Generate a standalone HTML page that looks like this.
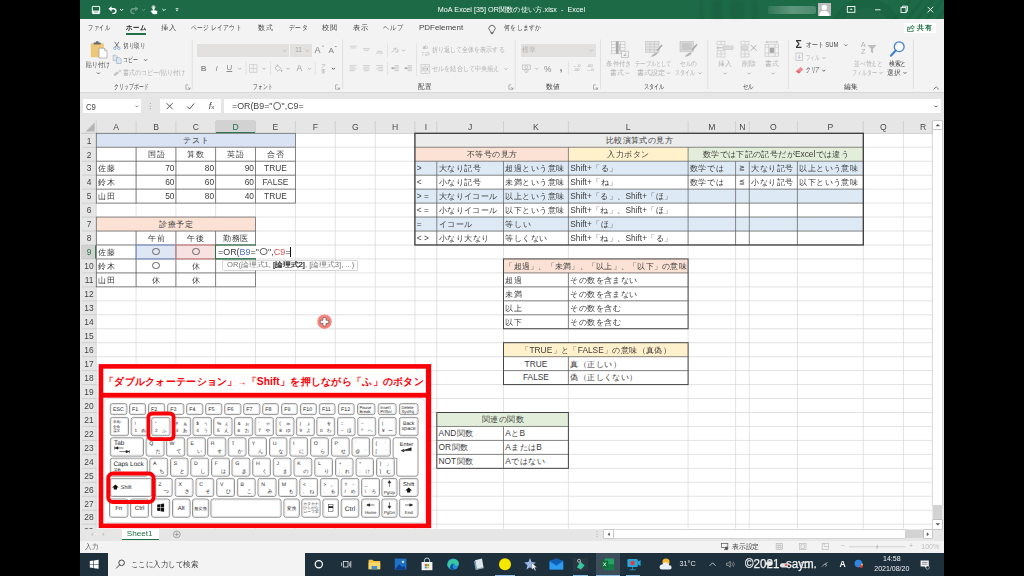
<!DOCTYPE html>
<html><head><meta charset="utf-8"><title>Excel</title>
<style>
html,body{margin:0;padding:0;background:#000;}
body{width:1024px;height:576px;overflow:hidden;position:relative;font-family:"Liberation Sans", sans-serif;}
#bg div,#fl div{position:absolute;}
.t{position:absolute;white-space:nowrap;}
.j{text-align:justify;text-align-last:justify;text-justify:inter-character;}
svg{position:absolute;left:0;top:0;}
#app{position:absolute;left:0;top:0;width:1024px;height:576px;filter:blur(.35px);}
</style></head><body>
<div id="app">
<div id="bg">
<div style="left:80.00px;top:0.00px;width:864.00px;height:576.00px;background:#fff;"></div>
<div style="left:80.00px;top:0.00px;width:864.00px;height:19.30px;background:#1d6a47;"></div>
<div style="left:80.00px;top:19.30px;width:864.00px;height:72.80px;background:#f3f3f3;"></div>
<div style="left:80.00px;top:92.10px;width:864.00px;height:28.00px;background:#e6e6e6;"></div>
<div style="left:80.00px;top:92.10px;width:864.00px;height:1.00px;background:#d8d8d8;"></div>
<div style="left:82.80px;top:98.90px;width:58.70px;height:14.60px;background:#fff;"></div>
<div style="left:159.70px;top:98.90px;width:61.50px;height:14.60px;background:#fff;"></div>
<div style="left:224.00px;top:98.90px;width:717.00px;height:14.60px;background:#fff;"></div>
<div style="left:80.00px;top:120.00px;width:864.00px;height:13.50px;background:#e6e6e6;"></div>
<div style="left:80.00px;top:133.30px;width:16.30px;height:395.30px;background:#e6e6e6;"></div>
<div style="left:215.60px;top:120.00px;width:39.90px;height:13.50px;background:#d2d2d2;"></div>
<div style="left:215.60px;top:132.40px;width:39.90px;height:1.20px;background:#217346;"></div>
<div style="left:81.00px;top:244.98px;width:15.30px;height:13.96px;background:#d2d2d2;"></div>
<div style="left:95.30px;top:244.98px;width:1.20px;height:13.96px;background:#217346;"></div>
<div style="left:80.00px;top:528.60px;width:864.00px;height:12.00px;background:#e6e6e6;"></div>
<div style="left:80.00px;top:540.50px;width:864.00px;height:12.30px;background:#f3f3f3;"></div>
<div style="left:80.00px;top:552.80px;width:864.00px;height:23.20px;background:#1e303c;"></div>
<div style="left:107.80px;top:552.80px;width:197.40px;height:23.20px;background:#f3f3f3;"></div>
<div style="left:121.60px;top:528.60px;width:37.50px;height:10.80px;background:#fff;"></div>
<div style="left:121.60px;top:539.00px;width:37.50px;height:1.20px;background:#217346;"></div>
<div style="left:932.60px;top:120.00px;width:11.40px;height:408.60px;background:#e6e6e6;"></div>
<div style="left:933.30px;top:120.80px;width:9.00px;height:8.60px;background:#fff;box-shadow:0 0 0 .5px #ababab;"></div>
<div style="left:933.30px;top:130.00px;width:9.00px;height:375.00px;background:#fff;box-shadow:0 0 0 .5px #c4c4c4;"></div>
<div style="left:933.30px;top:505.40px;width:9.00px;height:14.40px;background:#d3d3d3;"></div>
<div style="left:933.30px;top:520.00px;width:9.00px;height:8.60px;background:#fff;box-shadow:0 0 0 .5px #ababab;"></div>
<div style="left:603.80px;top:529.90px;width:9.50px;height:8.60px;background:#fff;box-shadow:0 0 0 .5px #ababab;"></div>
<div style="left:613.80px;top:529.90px;width:290.80px;height:8.60px;background:#fff;box-shadow:0 0 0 .5px #c4c4c4;"></div>
<div style="left:905.00px;top:529.90px;width:18.50px;height:8.60px;background:#d3d3d3;"></div>
<div style="left:923.80px;top:529.90px;width:8.60px;height:8.60px;background:#fff;box-shadow:0 0 0 .5px #ababab;"></div>
<div style="left:81.00px;top:524.18px;width:15.30px;height:4.42px;background:#e6e6e6;overflow:hidden;"><span style="position:absolute;left:0;width:15.300px;text-align:center;top:1.600px;font-size:8.400px;line-height:10px;color:#444">29</span></div>
<div style="left:767.50px;top:6.00px;width:48.00px;height:8.00px;background:linear-gradient(90deg,rgba(255,255,255,.10),rgba(255,255,255,.30) 50%,rgba(255,255,255,.22));border-radius:2px;filter:blur(.6px);"></div>
<div style="left:817.50px;top:2.80px;width:13.50px;height:13.20px;background:#bcbfbd;"></div>
<div style="left:700.00px;top:0.00px;width:3.00px;height:19.30px;background:rgba(0,0,0,.06);filter:blur(1px);"></div>
<div style="left:712.00px;top:0.00px;width:10.00px;height:19.30px;background:rgba(0,0,0,.07);filter:blur(1.5px);"></div>
<div style="left:730.00px;top:0.00px;width:14.00px;height:19.30px;background:rgba(0,0,0,.06);filter:blur(1.5px);"></div>
<div style="left:752.00px;top:0.00px;width:6.00px;height:19.30px;background:rgba(0,0,0,.05);filter:blur(1.5px);"></div>
<div style="left:125.50px;top:33.40px;width:20.00px;height:1.60px;background:#217346;"></div>
<div style="left:903.50px;top:22.50px;width:32.50px;height:10.80px;background:#fff;"></div>
<div style="left:197.20px;top:43.80px;width:91.50px;height:13.00px;background:#e3e1df;"></div>
<div style="left:290.00px;top:43.80px;width:22.00px;height:13.00px;background:#e3e1df;"></div>
<div style="left:520.50px;top:43.80px;width:75.30px;height:13.00px;background:#e3e1df;"></div>
<div style="left:494.60px;top:574.60px;width:20.80px;height:1.40px;background:#8cc0e8;"></div>
<div style="left:572.60px;top:557.60px;width:15.60px;height:13.60px;background:#2a3740;"></div>
<div style="left:573.00px;top:574.60px;width:15.00px;height:1.40px;background:#8cc0e8;"></div>
<div style="left:595.60px;top:552.80px;width:24.00px;height:23.20px;background:#3c4e59;"></div>
<div style="left:595.60px;top:574.60px;width:24.00px;height:1.40px;background:#8cc0e8;"></div>
<div style="left:626.40px;top:574.60px;width:14.00px;height:1.40px;background:#8cc0e8;"></div>
</div>
<svg width="1024" height="576" viewBox="0 0 1024 576">
<path d="M96.3 147.26H932.3 M96.3 161.22H932.3 M96.3 175.18H932.3 M96.3 189.14H932.3 M96.3 203.10H932.3 M96.3 217.06H932.3 M96.3 231.02H932.3 M96.3 244.98H932.3 M96.3 258.94H932.3 M96.3 272.90H932.3 M96.3 286.86H932.3 M96.3 300.82H932.3 M96.3 314.78H932.3 M96.3 328.74H932.3 M96.3 342.70H932.3 M96.3 356.66H932.3 M96.3 370.62H932.3 M96.3 384.58H932.3 M96.3 398.54H932.3 M96.3 412.50H932.3 M96.3 426.46H932.3 M96.3 440.42H932.3 M96.3 454.38H932.3 M96.3 468.34H932.3 M96.3 482.30H932.3 M96.3 496.26H932.3 M96.3 510.22H932.3 M96.3 524.18H932.3 M136.10 133.3V528.6 M175.90 133.3V528.6 M215.60 133.3V528.6 M255.50 133.3V528.6 M295.40 133.3V528.6 M335.30 133.3V528.6 M375.30 133.3V528.6 M414.90 133.3V528.6 M436.80 133.3V528.6 M503.50 133.3V528.6 M568.40 133.3V528.6 M688.10 133.3V528.6 M735.60 133.3V528.6 M749.30 133.3V528.6 M797.40 133.3V528.6 M863.30 133.3V528.6 M903.40 133.3V528.6 M932.30 133.3V528.6" stroke="#d2d2d2" stroke-width="0.62" fill="none"/>
<path d="M96.3 120.500V528.600M81 133.400H932.400" stroke="#c9c9c9" stroke-width=".7" fill="none"/>
</svg>
<div id="fl">
<div style="left:96.30px;top:133.30px;width:199.10px;height:13.96px;background:#dae3f3;"></div>
<div style="left:96.30px;top:217.06px;width:159.20px;height:13.96px;background:#fbe2d5;"></div>
<div style="left:136.10px;top:244.98px;width:39.80px;height:13.96px;background:#dfe7f5;"></div>
<div style="left:175.90px;top:244.98px;width:39.70px;height:13.96px;background:#f7e1e1;"></div>
<div style="left:414.90px;top:133.30px;width:448.40px;height:13.96px;background:#ececec;"></div>
<div style="left:414.90px;top:147.26px;width:153.50px;height:13.96px;background:#fbe2d5;"></div>
<div style="left:568.40px;top:147.26px;width:119.70px;height:13.96px;background:#fff1cc;"></div>
<div style="left:688.10px;top:147.26px;width:175.20px;height:13.96px;background:#e2eed9;"></div>
<div style="left:414.90px;top:161.22px;width:448.40px;height:13.96px;background:#ddeaf6;"></div>
<div style="left:414.90px;top:189.14px;width:448.40px;height:13.96px;background:#ddeaf6;"></div>
<div style="left:414.90px;top:217.06px;width:448.40px;height:13.96px;background:#ddeaf6;"></div>
<div style="left:503.50px;top:258.94px;width:184.60px;height:13.96px;background:#fbe2d5;"></div>
<div style="left:503.50px;top:342.70px;width:184.60px;height:13.96px;background:#fff1cc;"></div>
<div style="left:436.80px;top:412.50px;width:131.60px;height:13.96px;background:#e2eed9;"></div>
</div>
<svg width="1024" height="576" viewBox="0 0 1024 576">
<path d="M136.10 121V133 M175.90 121V133 M215.60 121V133 M255.50 121V133 M295.40 121V133 M335.30 121V133 M375.30 121V133 M414.90 121V133 M436.80 121V133 M503.50 121V133 M568.40 121V133 M688.10 121V133 M735.60 121V133 M749.30 121V133 M797.40 121V133 M863.30 121V133 M903.40 121V133 M932.30 121V133 M82 133.30H96 M82 147.26H96 M82 161.22H96 M82 175.18H96 M82 189.14H96 M82 203.10H96 M82 217.06H96 M82 231.02H96 M82 244.98H96 M82 258.94H96 M82 272.90H96 M82 286.86H96 M82 300.82H96 M82 314.78H96 M82 328.74H96 M82 342.70H96 M82 356.66H96 M82 370.62H96 M82 384.58H96 M82 398.54H96 M82 412.50H96 M82 426.46H96 M82 440.42H96 M82 454.38H96 M82 468.34H96 M82 482.30H96 M82 496.26H96 M82 510.22H96 M82 524.18H96" stroke="#c6c6c6" stroke-width="0.7" fill="none"/>
<path d="M94.6 122.6V131.6H85.6Z" fill="#b4b4b4"/>
<rect x="96.30" y="133.30" width="199.10" height="69.80" stroke="#646464" stroke-width="0.75" fill="none"/>
<path d="M96.30 147.26H295.40" stroke="#646464" stroke-width="0.75" fill="none"/>
<path d="M96.30 161.22H295.40" stroke="#646464" stroke-width="0.75" fill="none"/>
<path d="M96.30 175.18H295.40" stroke="#646464" stroke-width="0.75" fill="none"/>
<path d="M96.30 189.14H295.40" stroke="#646464" stroke-width="0.75" fill="none"/>
<path d="M136.10 147.26V203.10" stroke="#646464" stroke-width="0.75" fill="none"/>
<path d="M175.90 147.26V203.10" stroke="#646464" stroke-width="0.75" fill="none"/>
<path d="M215.60 147.26V203.10" stroke="#646464" stroke-width="0.75" fill="none"/>
<path d="M255.50 147.26V203.10" stroke="#646464" stroke-width="0.75" fill="none"/>
<rect x="96.30" y="217.06" width="159.20" height="69.80" stroke="#646464" stroke-width="0.75" fill="none"/>
<path d="M96.30 231.02H255.50" stroke="#646464" stroke-width="0.75" fill="none"/>
<path d="M96.30 244.98H255.50" stroke="#646464" stroke-width="0.75" fill="none"/>
<path d="M96.30 258.94H255.50" stroke="#646464" stroke-width="0.75" fill="none"/>
<path d="M96.30 272.90H255.50" stroke="#646464" stroke-width="0.75" fill="none"/>
<path d="M136.10 231.02V286.86" stroke="#646464" stroke-width="0.75" fill="none"/>
<path d="M175.90 231.02V286.86" stroke="#646464" stroke-width="0.75" fill="none"/>
<path d="M215.60 231.02V286.86" stroke="#646464" stroke-width="0.75" fill="none"/>
<path d="M414.90 147.26H863.30" stroke="#646464" stroke-width="0.75" fill="none"/>
<path d="M414.90 161.22H863.30" stroke="#646464" stroke-width="0.75" fill="none"/>
<path d="M414.90 175.18H863.30" stroke="#646464" stroke-width="0.75" fill="none"/>
<path d="M414.90 189.14H863.30" stroke="#646464" stroke-width="0.75" fill="none"/>
<path d="M414.90 203.10H863.30" stroke="#646464" stroke-width="0.75" fill="none"/>
<path d="M414.90 217.06H863.30" stroke="#646464" stroke-width="0.75" fill="none"/>
<path d="M414.90 231.02H863.30" stroke="#646464" stroke-width="0.75" fill="none"/>
<path d="M436.80 161.22V244.98" stroke="#646464" stroke-width="0.75" fill="none"/>
<path d="M503.50 161.22V244.98" stroke="#646464" stroke-width="0.75" fill="none"/>
<path d="M568.40 147.26V244.98" stroke="#646464" stroke-width="0.75" fill="none"/>
<path d="M688.10 147.26V244.98" stroke="#646464" stroke-width="0.75" fill="none"/>
<path d="M735.60 161.22V244.98" stroke="#646464" stroke-width="0.75" fill="none"/>
<path d="M749.30 161.22V244.98" stroke="#646464" stroke-width="0.75" fill="none"/>
<path d="M797.40 161.22V244.98" stroke="#646464" stroke-width="0.75" fill="none"/>
<rect x="414.90" y="133.30" width="448.40" height="111.68" stroke="#3a3a3a" stroke-width="1.3" fill="none"/>
<rect x="503.50" y="258.94" width="184.60" height="69.80" stroke="#444" stroke-width="1.0" fill="none"/>
<path d="M503.50 272.90H688.10" stroke="#646464" stroke-width="0.75" fill="none"/>
<path d="M503.50 286.86H688.10" stroke="#646464" stroke-width="0.75" fill="none"/>
<path d="M503.50 300.82H688.10" stroke="#646464" stroke-width="0.75" fill="none"/>
<path d="M503.50 314.78H688.10" stroke="#646464" stroke-width="0.75" fill="none"/>
<path d="M568.40 272.90V328.74" stroke="#646464" stroke-width="0.75" fill="none"/>
<rect x="503.50" y="342.70" width="184.60" height="41.88" stroke="#444" stroke-width="1.0" fill="none"/>
<path d="M503.50 356.66H688.10" stroke="#646464" stroke-width="0.75" fill="none"/>
<path d="M503.50 370.62H688.10" stroke="#646464" stroke-width="0.75" fill="none"/>
<path d="M568.40 356.66V384.58" stroke="#646464" stroke-width="0.75" fill="none"/>
<rect x="436.80" y="412.50" width="131.60" height="55.84" stroke="#444" stroke-width="1.0" fill="none"/>
<path d="M436.80 426.46H568.40" stroke="#646464" stroke-width="0.75" fill="none"/>
<path d="M436.80 440.42H568.40" stroke="#646464" stroke-width="0.75" fill="none"/>
<path d="M436.80 454.38H568.40" stroke="#646464" stroke-width="0.75" fill="none"/>
<path d="M503.50 426.46V468.34" stroke="#646464" stroke-width="0.75" fill="none"/>
<rect x="136.10" y="244.98" width="39.80" height="13.96" stroke="#7296d8" stroke-width="0.8" fill="none"/>
<rect x="135.30" y="244.18" width="1.600" height="1.600" fill="#7296d8"/>
<rect x="175.10" y="244.18" width="1.600" height="1.600" fill="#7296d8"/>
<rect x="135.30" y="258.14" width="1.600" height="1.600" fill="#7296d8"/>
<rect x="175.10" y="258.14" width="1.600" height="1.600" fill="#7296d8"/>
<rect x="175.90" y="244.98" width="39.70" height="13.96" stroke="#e27f7c" stroke-width="0.8" fill="none"/>
<rect x="175.10" y="244.18" width="1.600" height="1.600" fill="#e27f7c"/>
<rect x="214.80" y="244.18" width="1.600" height="1.600" fill="#e27f7c"/>
<rect x="175.10" y="258.14" width="1.600" height="1.600" fill="#e27f7c"/>
<rect x="214.80" y="258.14" width="1.600" height="1.600" fill="#e27f7c"/>
<path d="M255.50 244.98H215.60V258.94H255.50" stroke="#217346" stroke-width="1.2" fill="none"/>
<circle cx="824.3" cy="7.4" r="2.7" fill="#fff"/><path d="M819.3 16v-1.2c0-2.6 2.2-4 5-4s5 1.4 5 4V16z" fill="#fff"/>
<clipPath id="tbc"><rect x="80" y="0" width="864" height="19.3"/></clipPath><g clip-path="url(#tbc)" stroke="rgba(0,0,0,.06)" stroke-width="3.5" fill="none"><path d="M905 22L925 -3"/><path d="M915 22L935 -3"/><path d="M925 22L945 -3"/><path d="M935 22L955 -3"/><path d="M893 22L913 -3"/><circle cx="866" cy="34" r="36" fill="rgba(0,0,0,.05)" stroke="none"/><circle cx="866" cy="34" r="26" fill="rgba(255,255,255,.025)" stroke="none"/></g>
<g fill="none" stroke="#fff" stroke-width="1">
<rect x="92.300" y="6.400" width="7.400" height="7.200" rx=".7"/><rect x="92.600" y="10.600" width="6.800" height="2.800" fill="#fff" stroke="none"/><rect x="94.400" y="11.500" width="1.100" height="1" fill="#1d6a47" stroke="none"/><rect x="96.500" y="11.500" width="1.100" height="1" fill="#1d6a47" stroke="none"/>
<path d="M110.200 8.800h3.400a2.300 2.300 0 0 1 0 4.600h-1.200" stroke-width="1.400"/><path d="M111.600 6.200L108.400 8.800l3.200 2.600z" fill="#fff" stroke="none"/>
<path d="M120 9l1.600 1.600 1.600-1.600" stroke-width="1"/>
<g opacity=".35"><path d="M136.600 8.800h-3.400a2.300 2.300 0 0 0 0 4.600h1.200" stroke-width="1.400"/><path d="M135.200 6.200l3.200 2.600-3.200 2.600z" fill="#fff" stroke="none"/><path d="M142 9l1.600 1.600 1.600-1.600" stroke-width="1"/></g>
<circle cx="153.500" cy="7.200" r="1.500" stroke-width=".8"/><path d="M152.900 7.200v3.800l-1.300-.4-.5.800 2 2.600h3.600l.5-2.800-3.100-1V7.200a.6.600 0 0 0-1.200 0z" fill="#fff" stroke-width=".4"/>
<path d="M162.400 9l1.600 1.600 1.600-1.600" stroke-width="1"/>
<path d="M175.600 8.600h2.800" stroke-width=".8"/><path d="M175.600 9.800l1.400 1.400 1.400-1.400z" fill="#fff" stroke="none"/>
<rect x="847.300" y="6.500" width="7.600" height="5.800" stroke-width=".9"/><path d="M849.600 9.800l1.500-1.600 1.500 1.600z" fill="#fff" stroke="none"/>
<path d="M875 9.800h5.600" stroke-width=".9"/>
<rect x="901" y="7.600" width="5" height="5" stroke-width=".9"/><path d="M902.400 7.600V6.200h5v5H906" stroke-width=".9"/>
<path d="M927.600 6.800l5.600 5.600M933.200 6.800l-5.600 5.600" stroke-width=".9"/>
</g>
<g fill="none" stroke="#444" stroke-width=".8"><path d="M489.8 30.6a3.1 3.1 0 1 1 4.4 0c-.6.6-.8 1-.8 1.8h-2.8c0-.8-.2-1.200-.8-1.800z"/><path d="M490.800 33.600h2.400"/></g>
<g fill="none" stroke="#217346" stroke-width=".8"><path d="M909.600 27.200h-2v4.200h5.600v-1.600"/><path d="M909 29.600c.2-2 1.400-3 3.200-3.100v-1.300l2.200 2-2.200 2v-1.300c-1.400 0-2.400.5-3.200 1.700z"/></g>
<path d="M192.2 39.5V89 M342.6 39.5V89 M515.3 39.5V89 M600.5 39.5V89 M707.8 39.5V89 M788.3 39.5V89 M913.4 39.5V89" stroke="#dadada" stroke-width=".8" fill="none"/>
<path d="M246 61.5V75M270.5 61.5V75M315.3 61.5V75M387.5 43.5V57M387.5 61.5V75M416.5 43V76M568.5 61.5V75" stroke="#dedede" stroke-width=".8" fill="none"/>
<g fill="none" stroke="#8a8a8a" stroke-width=".6"><path d="M186 85h-.1v4.2h4.2"/><path d="M186 84.8h2.2"/><path d="M188.2 87.2l1.8 1.8m0-1.4v1.4h-1.400"/></g>
<g fill="none" stroke="#8a8a8a" stroke-width=".6"><path d="M335.6 85h-.1v4.2h4.2"/><path d="M335.6 84.8h2.2"/><path d="M337.8 87.2l1.8 1.8m0-1.4v1.4h-1.400"/></g>
<g fill="none" stroke="#8a8a8a" stroke-width=".6"><path d="M509 85h-.1v4.2h4.2"/><path d="M509 84.8h2.2"/><path d="M511.2 87.2l1.8 1.8m0-1.4v1.4h-1.400"/></g>
<g fill="none" stroke="#8a8a8a" stroke-width=".6"><path d="M593.6 85h-.1v4.2h4.2"/><path d="M593.6 84.8h2.2"/><path d="M595.8000000000001 87.2l1.8 1.8m0-1.4v1.4h-1.400"/></g>
<path d="M96.9 72.45l1.5 1.5 1.5 -1.5" stroke="#444" stroke-width="0.8" fill="none"/>
<path d="M144.1 59.25l1.5 1.5 1.5 -1.5" stroke="#444" stroke-width="0.8" fill="none"/>
<path d="M283.0 49.75l1.5 1.5 1.5 -1.5" stroke="#b5b5b5" stroke-width="0.8" fill="none"/>
<path d="M306.0 49.75l1.5 1.5 1.5 -1.5" stroke="#b5b5b5" stroke-width="0.8" fill="none"/>
<path d="M238.2 67.85l1.5 1.5 1.5 -1.5" stroke="#aaa" stroke-width="0.8" fill="none"/>
<path d="M262.5 67.85l1.5 1.5 1.5 -1.5" stroke="#aaa" stroke-width="0.8" fill="none"/>
<path d="M286.5 67.85l1.5 1.5 1.5 -1.5" stroke="#aaa" stroke-width="0.8" fill="none"/>
<path d="M308.0 67.85l1.5 1.5 1.5 -1.5" stroke="#aaa" stroke-width="0.8" fill="none"/>
<path d="M331.9 67.85l1.5 1.5 1.5 -1.5" stroke="#333" stroke-width="0.8" fill="none"/>
<path d="M402.1 49.65l1.5 1.5 1.5 -1.5" stroke="#aaa" stroke-width="0.8" fill="none"/>
<path d="M504.5 68.25l1.5 1.5 1.5 -1.5" stroke="#aaa" stroke-width="0.8" fill="none"/>
<path d="M589.9 49.75l1.5 1.5 1.5 -1.5" stroke="#b5b5b5" stroke-width="0.8" fill="none"/>
<path d="M535.2 67.85l1.5 1.5 1.5 -1.5" stroke="#aaa" stroke-width="0.8" fill="none"/>
<path d="M625.9 72.45l1.5 1.5 1.5 -1.5" stroke="#aaa" stroke-width="0.8" fill="none"/>
<path d="M666.9 72.45l1.5 1.5 1.5 -1.5" stroke="#aaa" stroke-width="0.8" fill="none"/>
<path d="M698.5 72.45l1.5 1.5 1.5 -1.5" stroke="#aaa" stroke-width="0.8" fill="none"/>
<path d="M723.5 72.65l1.5 1.5 1.5 -1.5" stroke="#aaa" stroke-width="0.8" fill="none"/>
<path d="M747.5 72.65l1.5 1.5 1.5 -1.5" stroke="#aaa" stroke-width="0.8" fill="none"/>
<path d="M771.5 72.65l1.5 1.5 1.5 -1.5" stroke="#aaa" stroke-width="0.8" fill="none"/>
<path d="M844.3 44.45l1.5 1.5 1.5 -1.5" stroke="#555" stroke-width="0.8" fill="none"/>
<path d="M822.5 57.05l1.5 1.5 1.5 -1.5" stroke="#aaa" stroke-width="0.8" fill="none"/>
<path d="M822.3 69.85l1.5 1.5 1.5 -1.5" stroke="#444" stroke-width="0.8" fill="none"/>
<path d="M879.5 72.05l1.5 1.5 1.5 -1.5" stroke="#aaa" stroke-width="0.8" fill="none"/>
<path d="M903.5 72.05l1.5 1.5 1.5 -1.5" stroke="#444" stroke-width="0.8" fill="none"/>
<path d="M934.5 105.65l1.5 1.5 1.5 -1.5" stroke="#3a3a3a" stroke-width="0.8" fill="none"/>
<path d="M933.6 89.4l2.6-2.600 2.600 2.600" stroke="#555" stroke-width=".8" fill="none"/>
<path d="M135.5 105.64999999999999l1.3 1.3 1.3 -1.3" stroke="#666" stroke-width="0.8" fill="none"/>
<g fill="#8a8a8a"><circle cx="150.300" cy="103.6" r=".5"/><circle cx="150.300" cy="106.2" r=".5"/><circle cx="150.300" cy="108.8" r=".5"/></g>
<g fill="none" stroke="#555" stroke-width="1"><path d="M166.6 103.2l6 6M172.600 103.200l-6 6"/><path d="M187.200 106.600l2.400 2.400 4.600-5.600"/></g>
<g fill="none" stroke="#777" stroke-width=".6"><circle cx="176.800" cy="534.4" r="3.4"/><path d="M174.800 534.400h4M176.800 532.400v4"/></g>
<path d="M92.800 532.600l-1.800 1.800 1.800 1.800zM102.8 532.600l1.800 1.800-1.800 1.800z" fill="#c2c2c2"/>
<g fill="#9a9a9a"><circle cx="597" cy="531.800" r=".5"/><circle cx="597" cy="534.2" r=".5"/><circle cx="597" cy="536.600" r=".5"/></g>
<path d="M609.800 532.200l-2.200 2 2.200 2zM926.800 532.200l2.200 2-2.200 2zM935.600 126.300l2.200-2.200 2.200 2.200zM935.600 523.200l2.200 2.200 2.200-2.200z" fill="#555"/>
<g fill="none" stroke="#555" stroke-width=".7"><rect x="721.600" y="543.400" width="6.200" height="4.200"/><path d="M724 549.600h3.600M725.800 547.600v2"/><circle cx="726.600" cy="548.200" r="1.300" fill="#555"/></g>
<g fill="none" stroke="#bdbdbd" stroke-width=".7"><rect x="776.200" y="543.600" width="6.400" height="6"/><path d="M776.200 545.600h6.400M776.200 547.600h6.400M778.300 543.600v6M780.400 543.600v6"/><rect x="799.600" y="543.600" width="6.400" height="6"/><rect x="801" y="544.800" width="3.600" height="3.600"/><rect x="822.200" y="543.600" width="6.400" height="6"/><path d="M824.200 543.600v3h4.400"/></g>
<path d="M849 546.800h56.500" stroke="#c4c4c4" stroke-width=".7"/><path d="M877.200 544.800v4" stroke="#b0b0b0" stroke-width=".9"/>
<path d="M89.800 561l3.600-.5v3.500h-3.600zM94 560.400l4.600-.6v4.200H94zM89.800 564.600h3.600v3.500l-3.600-.5zM94 564.600h4.600v4.200l-4.600-.6z" fill="#fff"/>
<g fill="none" stroke="#333" stroke-width=".9"><circle cx="121.600" cy="562.800" r="2.800"/><path d="M119.600 564.900l-3.400 3.500"/></g>
<circle cx="318.800" cy="564.200" r="3.600" fill="none" stroke="#fff" stroke-width="1.200"/>
<g fill="none" stroke="#e8e8e8" stroke-width=".8"><rect x="343.400" y="561.600" width="4.600" height="5.400"/><path d="M341.600 562.400v3.800M349.800 562.400v3.800M350.800 561v6.600"/></g>
<path d="M368.600 559.800h4l1 1.200h6.600v8.200h-11.600z" fill="#f5c341"/><path d="M368.600 562.600h11.600v6.600h-11.600z" fill="#fbd867"/><rect x="371.600" y="566" width="5.600" height="3.200" fill="#3f8fd8"/>
<rect x="394.800" y="558.600" width="11.600" height="11.200" fill="#1e73c8"/><path d="M394.800 569.800l4.400-5.600 3 3.200 1.600-1.600 2.600 4z" fill="#0f3f86"/><circle cx="403" cy="561.800" r="1.100" fill="#fff"/>
<path d="M421.600 562h10.800v8.200h-10.800z" fill="#f2f2f2"/><path d="M424.400 562v-1.400a2.600 2.600 0 0 1 5.200 0v1.400" fill="none" stroke="#f2f2f2" stroke-width=".8"/><rect x="424.800" y="564" width="2" height="2" fill="#e74f2d"/><rect x="427.200" y="564" width="2" height="2" fill="#7db72f"/><rect x="424.800" y="566.400" width="2" height="2" fill="#2a9be6"/><rect x="427.200" y="566.400" width="2" height="2" fill="#f5b91f"/>
<circle cx="453" cy="564.200" r="5.800" fill="#1f8fd6"/><path d="M447.400 565.600c0-4 3-6.800 6.600-6.600 3 .2 4.800 2.200 4.800 4.400 0 1.400-1 2.400-2.600 2.400-1 0-1.400-.6-1.200-1.200-2-1.800-5.200 0-3.800 3.600-2.400-.2-3.800-1.400-3.800-2.600z" fill="#38c7a5"/><path d="M450.600 568.400c.8 1.400 3.400 2 5.600.6-1.800.2-3.400-.8-3.600-2.600-.2-1.400.6-2.400 2-2.400-2.800-1.200-5.400 1.600-4 4.400z" fill="#0f4f9a"/>
<path d="M475 560.200l7-1.600 1.600 9.200-7 1.600z" fill="#dfe6ea"/><path d="M474 561.200l1.600-.4 1.400 8.800-1.400.3z" fill="#6fa7c4"/><path d="M476.600 568.600l6.800-1.400.2 1-6.800 1.500z" fill="#9aa6ad"/>
<circle cx="505" cy="564.200" r="6" fill="#f7e600"/>
<path d="M530 558l1.600 4 4.200.4-3.200 2.800 1 4.200-3.600-2.200-3.600 2.200 1-4.200-3.200-2.800 4.200-.4z" fill="#9ab6e6"/><path d="M531.600 562.600l.4 7 1.600-1.600 1.400 2.800 1-.6-1.400-2.600 2.200-.2z" fill="#fff" stroke="#223" stroke-width=".3"/>
<path d="M549.600 560.800h13.600v8.600h-13.600z" fill="#1b84d8"/><path d="M549.600 560.800l6.800-2.600 6.800 2.600-6.800 4.400z" fill="#0f5fae"/><path d="M549.600 561.800l6.800 4.200 6.800-4.200v7.600h-13.600z" fill="#2d9bef"/>
<path d="M577 567.600l3.200-6 4.400 3.800-3.600 4.200z" fill="#35c5a0"/><circle cx="579" cy="560.800" r="1.500" fill="none" stroke="#fff" stroke-width=".6"/>
<rect x="604.600" y="558.600" width="9.400" height="11.200" rx=".8" fill="#21a366"/><rect x="604.600" y="564.200" width="9.400" height="5.600" fill="#107c41"/><rect x="601.200" y="560.800" width="7" height="7" rx=".6" fill="#0e6a37"/><path d="M603.200 562.400l3 3.800M606.200 562.400l-3 3.800" stroke="#fff" stroke-width=".8"/>
<rect x="627.400" y="559" width="10.400" height="8" rx="1.200" fill="#2aa7d8"/><path d="M637.800 561.600l2.800-1.600v6l-2.800-1.600z" fill="#2aa7d8"/><circle cx="632.600" cy="563" r="2.200" fill="#e33c3c"/><path d="M632.600 567v2.400M629.600 569.800h6" stroke="#2aa7d8" stroke-width=".8"/>
<circle cx="666" cy="562" r="3.600" fill="#f7b731"/><path d="M662 569.600a2.600 2.600 0 0 1 .4-5.200 3.600 3.600 0 0 1 6.800.8 2.200 2.200 0 0 1 .4 4.400z" fill="#e9eef3"/>
<path d="M709.600 565.800l3-3 3 3" stroke="#e0e0e0" stroke-width=".8" fill="none"/>
<path d="M726.600 563.200h1.600l2-1.800v5.800l-2-1.800h-1.600z" fill="none" stroke="#cfcfcf" stroke-width=".6"/><path d="M731.800 562.600a2.400 2.400 0 0 1 0 3.400M733.200 561.600a4 4 0 0 1 0 5.400" fill="none" stroke="#bdbdbd" stroke-width=".5"/>
<rect x="766" y="561.200" width="6.800" height="4.600" rx="2" fill="#e8e8e8"/><rect x="780" y="563.200" width="8" height="4.400" rx="2" fill="#e4e4e4"/><path d="M785 565.600l4-1.600" stroke="#e44" stroke-width="1.600"/><rect x="801" y="562.600" width="8" height="5" fill="none" stroke="#cfcfcf" stroke-width=".7"/>
<path d="M822 566.600l2.400-2.400a1.300 1.300 0 0 1 1.800 1.800l-.6.600M827.400 562.200l-2.400 2.400" stroke="#d0d0d0" stroke-width=".8" fill="none"/>
<circle cx="858.400" cy="563.600" r="3.800" fill="#2f86e4"/><circle cx="861.200" cy="566.200" r="1.600" fill="#e33c3c"/><circle cx="862" cy="564.600" r="1" fill="#f5c341"/>
<path d="M920.600 560.400h8.200v6h-2.200v2.200l-2.200-2.200h-3.800z" fill="#f2f2f2"/><path d="M922 562.400h5.400M922 564.200h5.400" stroke="#1e303c" stroke-width=".5"/><circle cx="927.600" cy="567.600" r="1.700" fill="#1e303c" stroke="#f2f2f2" stroke-width=".5"/>
<rect x="90.800" y="43.200" width="13" height="14" rx=".6" fill="#efc778"/><rect x="93.600" y="42.600" width="7.200" height="1.900" rx=".4" fill="#6a6a6a"/><rect x="95.800" y="41.200" width="2.800" height="1.800" rx=".5" fill="#6a6a6a"/><path d="M99 48.200h5.400l2.600 2.600v7.200h-8z" fill="#fff" stroke="#909090" stroke-width=".6"/><path d="M104.400 48.200v2.600h2.600" fill="none" stroke="#909090" stroke-width=".5"/>
<g fill="none" stroke-width=".8"><path d="M114.600 41.800l3.800 5.600M119 41.800l-3.800 5.600" stroke="#555"/><circle cx="114.800" cy="48.300" r="1.200" stroke="#6b9bd6" stroke-width=".7"/><circle cx="118.800" cy="48.300" r="1.200" stroke="#6b9bd6" stroke-width=".7"/></g>
<g fill="#dbe9f6" stroke="#8e9aa6" stroke-width=".5"><path d="M113.200 55.200h2.600l1.200 1.200v4.200h-3.800z"/><path d="M116.600 57.700h3.200l1.400 1.400v4.400h-4.600z"/></g>
<g fill="#c2c2c2"><path d="M113.400 74.400l4.200-3.200 1.400 1.800-4.200 3.200z"/><path d="M118.400 70.600l1.800-1.400 1.400 1.800-1.800 1.400z" opacity=".7"/></g>
<path d="M321.800 46.400l1.200-1.200 1.200 1.200z" fill="#8a8a8a"/><path d="M334.600 46l1.200 1.200 1.200-1.200z" fill="#8a8a8a"/>
<g fill="none" stroke="#c2c2c2" stroke-width=".6"><rect x="249.600" y="64.800" width="7.400" height="7.400"/><path d="M253.300 64.800v7.400M249.600 68.500h7.400"/></g>
<g fill="none" stroke="#a8a8a8" stroke-width=".7"><path d="M277.600 65.200l3.200 3.200-2.800 2.800-3.200-3.200z"/><path d="M277.200 64.400v2.400"/><path d="M281.600 69.800c.6.800.6 1.400 0 1.600-.6-.2-.6-.8 0-1.600z" fill="#a8a8a8"/></g>
<g fill="none" stroke="#b5b5b5" stroke-width=".6"><path d="M321.600 64.600h3.400l-2 2.800M323 67.400h-1"/><path d="M321.400 69.600h4M321.400 71.200h4M323.400 69v4.200M321.800 72.800h3.200"/></g>
<path d="M349.70 46.20h7 M350.70 47.90h5" stroke="#c2c2c2" stroke-width="0.7" fill="none"/>
<path d="M362.90 48.60h7 M363.90 50.30h5" stroke="#c2c2c2" stroke-width="0.7" fill="none"/>
<path d="M377.00 51.40h5 M376.00 53.10h7" stroke="#c2c2c2" stroke-width="0.7" fill="none"/>
<path d="M349.60 65.60h7 M349.60 67.30h5 M349.60 69.00h7 M349.60 70.70h5" stroke="#c2c2c2" stroke-width="0.7" fill="none"/>
<path d="M362.90 65.60h7 M363.90 67.30h5 M362.90 69.00h7 M363.90 70.70h5" stroke="#c2c2c2" stroke-width="0.7" fill="none"/>
<path d="M376.10 65.60h7 M378.10 67.30h5 M376.10 69.00h7 M378.10 70.70h5" stroke="#c2c2c2" stroke-width="0.7" fill="none"/>
<g fill="none" stroke="#b0b0b0" stroke-width=".7"><path d="M391.600 52.600l5-5"/><path d="M393.600 48.400c1.600-.8 2.800.4 2.200 1.800M395.400 51.800l2.600.200-.200-2.600"/></g>
<path d="M394.40 65.60h4.4 M394.40 67.30h4.4 M394.40 69.00h4.4 M394.40 70.70h4.4" stroke="#bcbcbc" stroke-width="0.7" fill="none"/>
<path d="M391 68.200h3.600" stroke="#999" stroke-width=".7"/><path d="M392.4 66.800l1.600 1.400-1.600 1.400z" fill="#999"/>
<path d="M407.60 65.60h4.4 M407.60 67.30h4.4 M407.60 69.00h4.4 M407.60 70.70h4.4" stroke="#bcbcbc" stroke-width="0.7" fill="none"/>
<path d="M404.2 68.200h3.600" stroke="#999" stroke-width=".7"/><path d="M405.59999999999997 66.800l1.600 1.400-1.600 1.400z" fill="#999"/>
<g fill="none" stroke="#b5b5b5" stroke-width=".6"><path d="M422 52.600h2.600M422 54.800h1.600"/><path d="M425.600 52.600h2.400a1.200 1.200 0 0 1 0 2.400h-2.600M426.400 54l-1 1 1 1"/></g>
<g fill="none" stroke="#c2c2c2" stroke-width=".6"><rect x="421" y="64.400" width="8.600" height="9"/><path d="M421 67h8.600M421 70.800h8.600M425.300 64.400v2.600M425.300 70.800v2.600"/><path d="M422.600 68.900h5.400M423.600 68l-1 .900 1 .900M427 68l1 .900-1 .900" stroke="#9a9a9a"/></g>
<g fill="none" stroke="#b0b0b0" stroke-width=".6"><rect x="522.400" y="65" width="7.800" height="4.600"/><circle cx="526.300" cy="67.300" r="1.300"/><path d="M524 71h4.600M525 72.400h2.600"/></g>
<g fill="none" stroke="#c2c2c2" stroke-width=".6"><rect x="611.400" y="41.400" width="13.600" height="12.400"/><path d="M611.400 44.500h13.600M611.400 47.600h13.600M611.400 50.700h13.600M616 41.400v12.400M620.400 41.400v12.400"/><rect x="616" y="41.400" width="2.600" height="12.400" fill="#a8a8a8" stroke="none"/><rect x="618.600" y="44.500" width="1.800" height="6.200" fill="#c8c8c8" stroke="none"/><rect x="621.600" y="51.200" width="7" height="6.200" fill="#f3f3f3" stroke="#b0b0b0"/><path d="M623.600 55.400h3M624.200 56l1.800-3" stroke="#999"/></g>
<g fill="none" stroke="#c2c2c2" stroke-width=".6"><rect x="645.400" y="41.400" width="13.600" height="11.200" fill="#e4e4e4"/><path d="M645.400 44.200h13.600M645.400 47h13.600M645.400 49.800h13.600M650 41.400v11.200M654.400 41.400v11.200"/><path d="M656.400 50.400l5-6 1.200 1-5 6z" fill="#a8a8a8" stroke="none"/><path d="M650.600 56.800c2.400-3 4.400-3.600 6.400-4.600l.600 1.400c-1.400 1.600-3.600 3.200-7 3.200z" fill="#b5b5b5" stroke="none"/></g>
<g fill="none" stroke="#c2c2c2" stroke-width=".6"><rect x="680" y="41.400" width="13.600" height="10.400" fill="#d8d8d8"/><rect x="682" y="43.200" width="9.600" height="6.800" fill="#c9c9c9" stroke="none"/><path d="M691.400 49.800l5-6 1.200 1-5 6z" fill="#a8a8a8" stroke="none"/><path d="M684.600 56.600c2.400-3 4.400-3.600 6.400-4.600l.600 1.400c-1.400 1.600-3.600 3.200-7 3.200z" fill="#b5b5b5" stroke="none"/></g>
<g fill="none" stroke="#c2c2c2" stroke-width=".6"><rect x="717" y="41.200" width="8" height="3.600"/><rect x="717" y="50.800" width="8" height="6.200"/><path d="M717 53.900h8M721 41.200v3.600M721 50.800v6.200"/><rect x="723.600" y="46" width="9.400" height="3.600" fill="#dcdcdc"/><path d="M717 47.800h6" stroke="#aaa" stroke-width=".8"/><path d="M718.600 46.200l-1.800 1.600 1.800 1.600" stroke="#aaa"/></g>
<g fill="none" stroke="#c2c2c2" stroke-width=".6"><rect x="741" y="41.200" width="8" height="3.600"/><rect x="741" y="50.800" width="8" height="6.200"/><path d="M741 53.900h8M745 41.200v3.600M745 50.800v6.200"/><rect x="741" y="46" width="7" height="3.600" fill="#dcdcdc"/><path d="M750.600 44.800l6 6M756.600 44.800l-6 6" stroke="#aaa" stroke-width=".9"/></g>
<g fill="none" stroke="#c2c2c2" stroke-width=".6"><rect x="765" y="44.200" width="13.600" height="12"/><path d="M768.600 44.200v12M775 44.200v12M765 47.200h13.600M765 53.200h13.600"/><rect x="769.600" y="47.800" width="4.600" height="5" fill="#a8a8a8" stroke="none"/><path d="M766 42h11.600M767.200 41l-1.200 1 1.200 1M776.400 41l1.200 1-1.200 1" stroke="#aaa"/></g>
<g fill="none" stroke="#b5b5b5" stroke-width=".6"><rect x="795.900" y="53" width="6.800" height="7.600"/><path d="M799.300 54.600v3.600M797.900 57l1.400 1.400 1.400-1.400" stroke="#8fa8c8"/></g>
<path d="M796 71.400l4.400-4.400 3 2.200-4.400 4.400z" fill="#f08a92"/><path d="M796 71.400l1.400-1.400 3 2.200-1.400 1.400z" fill="#e8636e"/>
<path d="M867.400 45h9.200l-3.500 3.800v4.400l-2.200-1.200v-3.200z" fill="#bdbdbd"/>
<circle cx="899.200" cy="46.700" r="4.900" fill="#fff" stroke="#4481cc" stroke-width="1.300"/><path d="M895.700 50.500l-4.800 5.200" stroke="#4481cc" stroke-width="2.100" stroke-linecap="round"/>
</svg>
<div id="tx">
<div class="t j" style="top:135.17px;font-size:8.35px;line-height:10.02px;color:#3c3c3c;width:25.35px;left:183.32px;">テスト</div>
<div class="t j" style="top:149.13px;font-size:8.35px;line-height:10.02px;color:#3c3c3c;width:17.00px;left:147.65px;">国語</div>
<div class="t j" style="top:149.13px;font-size:8.35px;line-height:10.02px;color:#3c3c3c;width:17.00px;left:187.40px;">算数</div>
<div class="t j" style="top:149.13px;font-size:8.35px;line-height:10.02px;color:#3c3c3c;width:17.00px;left:227.20px;">英語</div>
<div class="t j" style="top:149.13px;font-size:8.35px;line-height:10.02px;color:#3c3c3c;width:17.00px;left:267.10px;">合否</div>
<div class="t j" style="top:163.09px;font-size:8.35px;line-height:10.02px;color:#3c3c3c;width:17.00px;left:98.10px;">佐藤</div>
<div class="t" style="top:163.09px;font-size:8.35px;line-height:10.02px;color:#3c3c3c;left:-125.60px;width:300px;text-align:right;">70</div>
<div class="t" style="top:163.09px;font-size:8.35px;line-height:10.02px;color:#3c3c3c;left:-85.90px;width:300px;text-align:right;">80</div>
<div class="t" style="top:163.09px;font-size:8.35px;line-height:10.02px;color:#3c3c3c;left:-46.00px;width:300px;text-align:right;">90</div>
<div class="t" style="top:163.09px;font-size:8.35px;line-height:10.02px;color:#3c3c3c;left:125.45px;width:300px;text-align:center;">TRUE</div>
<div class="t j" style="top:177.05px;font-size:8.35px;line-height:10.02px;color:#3c3c3c;width:17.00px;left:98.10px;">鈴木</div>
<div class="t" style="top:177.05px;font-size:8.35px;line-height:10.02px;color:#3c3c3c;left:-125.60px;width:300px;text-align:right;">60</div>
<div class="t" style="top:177.05px;font-size:8.35px;line-height:10.02px;color:#3c3c3c;left:-85.90px;width:300px;text-align:right;">60</div>
<div class="t" style="top:177.05px;font-size:8.35px;line-height:10.02px;color:#3c3c3c;left:-46.00px;width:300px;text-align:right;">60</div>
<div class="t" style="top:177.05px;font-size:8.35px;line-height:10.02px;color:#3c3c3c;left:125.45px;width:300px;text-align:center;">FALSE</div>
<div class="t j" style="top:191.01px;font-size:8.35px;line-height:10.02px;color:#3c3c3c;width:17.00px;left:98.10px;">山田</div>
<div class="t" style="top:191.01px;font-size:8.35px;line-height:10.02px;color:#3c3c3c;left:-125.60px;width:300px;text-align:right;">50</div>
<div class="t" style="top:191.01px;font-size:8.35px;line-height:10.02px;color:#3c3c3c;left:-85.90px;width:300px;text-align:right;">80</div>
<div class="t" style="top:191.01px;font-size:8.35px;line-height:10.02px;color:#3c3c3c;left:-46.00px;width:300px;text-align:right;">40</div>
<div class="t" style="top:191.01px;font-size:8.35px;line-height:10.02px;color:#3c3c3c;left:125.45px;width:300px;text-align:center;">TRUE</div>
<div class="t j" style="top:218.93px;font-size:8.35px;line-height:10.02px;color:#3c3c3c;width:33.70px;left:159.20px;">診療予定</div>
<div class="t j" style="top:232.89px;font-size:8.35px;line-height:10.02px;color:#3c3c3c;width:17.00px;left:147.65px;">午前</div>
<div class="t j" style="top:232.89px;font-size:8.35px;line-height:10.02px;color:#3c3c3c;width:17.00px;left:187.40px;">午後</div>
<div class="t j" style="top:232.89px;font-size:8.35px;line-height:10.02px;color:#3c3c3c;width:25.35px;left:223.03px;">勤務医</div>
<div class="t j" style="top:246.85px;font-size:8.35px;line-height:10.02px;color:#3c3c3c;width:17.00px;left:98.10px;">佐藤</div>
<div class="t" style="top:246.85px;font-size:8.35px;line-height:10.02px;color:#3c3c3c;left:6.00px;width:300px;text-align:center;"><span style="display:inline-block;width:5.7px;height:5.7px;border:0.6px solid #606060;border-radius:50%;vertical-align:-0.6px;margin:0 0.8px"></span></div>
<div class="t" style="top:246.85px;font-size:8.35px;line-height:10.02px;color:#3c3c3c;left:45.75px;width:300px;text-align:center;"><span style="display:inline-block;width:5.7px;height:5.7px;border:0.6px solid #606060;border-radius:50%;vertical-align:-0.6px;margin:0 0.8px"></span></div>
<div class="t j" style="top:260.81px;font-size:8.35px;line-height:10.02px;color:#3c3c3c;width:17.00px;left:98.10px;">鈴木</div>
<div class="t" style="top:260.81px;font-size:8.35px;line-height:10.02px;color:#3c3c3c;left:6.00px;width:300px;text-align:center;"><span style="display:inline-block;width:5.7px;height:5.7px;border:0.6px solid #606060;border-radius:50%;vertical-align:-0.6px;margin:0 0.8px"></span></div>
<div class="t j" style="top:260.81px;font-size:8.35px;line-height:10.02px;color:#3c3c3c;width:8.65px;left:191.57px;">休</div>
<div class="t j" style="top:274.77px;font-size:8.35px;line-height:10.02px;color:#3c3c3c;width:17.00px;left:98.10px;">山田</div>
<div class="t j" style="top:274.77px;font-size:8.35px;line-height:10.02px;color:#3c3c3c;width:8.65px;left:151.82px;">休</div>
<div class="t j" style="top:274.77px;font-size:8.35px;line-height:10.02px;color:#3c3c3c;width:8.65px;left:191.57px;">休</div>
<div style="position:absolute;left:216.300px;top:245.68px;width:75px;height:12.66px;background:#fff;"></div>
<div class="t j" style="top:246.86px;font-size:9px;line-height:10.80px;color:#3a3a3a;width:72.47px;left:217.60px;transform:scaleX(0.992);transform-origin:left center;">=OR(<span style="color:#4a72c4">B9</span>="<span style="display:inline-block;width:5.7px;height:5.7px;border:0.6px solid #606060;border-radius:50%;vertical-align:-0.6px;margin:0 0.8px"></span>",<span style="color:#d9534f">C9</span>=</div>
<div style="position:absolute;left:289.900px;top:247.18px;width:.8px;height:9.76px;background:#111;"></div>
<div class="t j" style="top:135.17px;font-size:8.35px;line-height:10.02px;color:#3c3c3c;width:67.10px;left:605.70px;">比較演算式の見方</div>
<div class="t j" style="top:149.13px;font-size:8.35px;line-height:10.02px;color:#3c3c3c;width:50.40px;left:466.60px;">不等号の見方</div>
<div class="t j" style="top:149.13px;font-size:8.35px;line-height:10.02px;color:#3c3c3c;width:42.05px;left:607.38px;">入力ボタン</div>
<div class="t j" style="top:149.13px;font-size:8.35px;line-height:10.02px;color:#3c3c3c;width:145.97px;left:702.87px;">数学では下記の記号だがExcelでは違う</div>
<div class="t" style="top:163.09px;font-size:8.35px;line-height:10.02px;color:#3c3c3c;left:416.70px;">&gt;</div>
<div class="t j" style="top:163.09px;font-size:8.35px;line-height:10.02px;color:#3c3c3c;width:42.05px;left:438.60px;">大なり記号</div>
<div class="t j" style="top:163.09px;font-size:8.35px;line-height:10.02px;color:#3c3c3c;width:58.75px;left:505.30px;">超過という意味</div>
<div class="t j" style="top:163.09px;font-size:8.35px;line-height:10.02px;color:#3c3c3c;width:46.93px;left:570.20px;">Shift+「る」</div>
<div class="t j" style="top:163.09px;font-size:8.35px;line-height:10.02px;color:#3c3c3c;width:33.70px;left:689.90px;">数学では</div>
<div class="t j" style="top:164.20px;font-size:6.5px;line-height:7.80px;color:#3c3c3c;width:6.80px;left:739.20px;">≧</div>
<div class="t j" style="top:163.09px;font-size:8.35px;line-height:10.02px;color:#3c3c3c;width:42.05px;left:751.10px;">大なり記号</div>
<div class="t j" style="top:163.09px;font-size:8.35px;line-height:10.02px;color:#3c3c3c;width:58.75px;left:799.20px;">以上という意味</div>
<div class="t" style="top:177.05px;font-size:8.35px;line-height:10.02px;color:#3c3c3c;left:416.70px;">&lt;</div>
<div class="t j" style="top:177.05px;font-size:8.35px;line-height:10.02px;color:#3c3c3c;width:42.05px;left:438.60px;">小なり記号</div>
<div class="t j" style="top:177.05px;font-size:8.35px;line-height:10.02px;color:#3c3c3c;width:58.75px;left:505.30px;">未満という意味</div>
<div class="t j" style="top:177.05px;font-size:8.35px;line-height:10.02px;color:#3c3c3c;width:46.93px;left:570.20px;">Shift+「ね」</div>
<div class="t j" style="top:177.05px;font-size:8.35px;line-height:10.02px;color:#3c3c3c;width:33.70px;left:689.90px;">数学では</div>
<div class="t j" style="top:178.16px;font-size:6.5px;line-height:7.80px;color:#3c3c3c;width:6.80px;left:739.20px;">≦</div>
<div class="t j" style="top:177.05px;font-size:8.35px;line-height:10.02px;color:#3c3c3c;width:42.05px;left:751.10px;">小なり記号</div>
<div class="t j" style="top:177.05px;font-size:8.35px;line-height:10.02px;color:#3c3c3c;width:58.75px;left:799.20px;">以下という意味</div>
<div class="t" style="top:191.01px;font-size:8.35px;line-height:10.02px;color:#3c3c3c;left:416.70px;">&gt; =</div>
<div class="t j" style="top:191.01px;font-size:8.35px;line-height:10.02px;color:#3c3c3c;width:58.75px;left:438.60px;">大なりイコール</div>
<div class="t j" style="top:191.01px;font-size:8.35px;line-height:10.02px;color:#3c3c3c;width:58.75px;left:505.30px;">以上という意味</div>
<div class="t j" style="top:191.01px;font-size:8.35px;line-height:10.02px;color:#3c3c3c;width:101.92px;left:570.20px;">Shift+「る」、Shift+「ほ」</div>
<div class="t" style="top:204.97px;font-size:8.35px;line-height:10.02px;color:#3c3c3c;left:416.70px;">&lt; =</div>
<div class="t j" style="top:204.97px;font-size:8.35px;line-height:10.02px;color:#3c3c3c;width:58.75px;left:438.60px;">小なりイコール</div>
<div class="t j" style="top:204.97px;font-size:8.35px;line-height:10.02px;color:#3c3c3c;width:58.75px;left:505.30px;">以下という意味</div>
<div class="t j" style="top:204.97px;font-size:8.35px;line-height:10.02px;color:#3c3c3c;width:101.92px;left:570.20px;">Shift+「ね」、Shift+「ほ」</div>
<div class="t" style="top:218.93px;font-size:8.35px;line-height:10.02px;color:#3c3c3c;left:416.70px;">=</div>
<div class="t j" style="top:218.93px;font-size:8.35px;line-height:10.02px;color:#3c3c3c;width:33.70px;left:438.60px;">イコール</div>
<div class="t j" style="top:218.93px;font-size:8.35px;line-height:10.02px;color:#3c3c3c;width:25.35px;left:505.30px;">等しい</div>
<div class="t j" style="top:218.93px;font-size:8.35px;line-height:10.02px;color:#3c3c3c;width:46.93px;left:570.20px;">Shift+「ほ」</div>
<div class="t" style="top:232.89px;font-size:8.35px;line-height:10.02px;color:#3c3c3c;left:416.70px;">&lt; &gt;</div>
<div class="t j" style="top:232.89px;font-size:8.35px;line-height:10.02px;color:#3c3c3c;width:50.40px;left:438.60px;">小なり大なり</div>
<div class="t j" style="top:232.89px;font-size:8.35px;line-height:10.02px;color:#3c3c3c;width:42.05px;left:505.30px;">等しくない</div>
<div class="t j" style="top:232.89px;font-size:8.35px;line-height:10.02px;color:#3c3c3c;width:101.92px;left:570.20px;">Shift+「ね」、Shift+「る」</div>
<div class="t j" style="top:261.31px;font-size:8.35px;line-height:10.02px;color:#3c3c3c;width:184.00px;left:503.95px;transform:scaleX(0.985);transform-origin:center center;">「超過」、「未満」、「以上」、「以下」の意味</div>
<div class="t j" style="top:274.77px;font-size:8.35px;line-height:10.02px;color:#3c3c3c;width:17.00px;left:505.30px;">超過</div>
<div class="t j" style="top:274.77px;font-size:8.35px;line-height:10.02px;color:#3c3c3c;width:67.10px;left:570.20px;">その数を含まない</div>
<div class="t j" style="top:288.73px;font-size:8.35px;line-height:10.02px;color:#3c3c3c;width:17.00px;left:505.30px;">未満</div>
<div class="t j" style="top:288.73px;font-size:8.35px;line-height:10.02px;color:#3c3c3c;width:67.10px;left:570.20px;">その数を含まない</div>
<div class="t j" style="top:302.69px;font-size:8.35px;line-height:10.02px;color:#3c3c3c;width:17.00px;left:505.30px;">以上</div>
<div class="t j" style="top:302.69px;font-size:8.35px;line-height:10.02px;color:#3c3c3c;width:50.40px;left:570.20px;">その数を含む</div>
<div class="t j" style="top:316.65px;font-size:8.35px;line-height:10.02px;color:#3c3c3c;width:17.00px;left:505.30px;">以下</div>
<div class="t j" style="top:316.65px;font-size:8.35px;line-height:10.02px;color:#3c3c3c;width:50.40px;left:570.20px;">その数を含む</div>
<div class="t j" style="top:344.57px;font-size:8.35px;line-height:10.02px;color:#3c3c3c;width:149.68px;left:521.11px;">「TRUE」と「FALSE」の意味（真偽）</div>
<div class="t" style="top:358.53px;font-size:8.35px;line-height:10.02px;color:#3c3c3c;left:385.95px;width:300px;text-align:center;">TRUE</div>
<div class="t j" style="top:358.53px;font-size:8.35px;line-height:10.02px;color:#3c3c3c;width:50.40px;left:570.20px;">真（正しい）</div>
<div class="t" style="top:372.49px;font-size:8.35px;line-height:10.02px;color:#3c3c3c;left:385.95px;width:300px;text-align:center;">FALSE</div>
<div class="t j" style="top:372.49px;font-size:8.35px;line-height:10.02px;color:#3c3c3c;width:67.10px;left:570.20px;">偽（正しくない）</div>
<div class="t j" style="top:414.37px;font-size:8.35px;line-height:10.02px;color:#3c3c3c;width:42.05px;left:481.73px;">関連の関数</div>
<div class="t j" style="top:428.33px;font-size:8.35px;line-height:10.02px;color:#3c3c3c;width:34.63px;left:438.60px;">AND関数</div>
<div class="t j" style="top:428.33px;font-size:8.35px;line-height:10.02px;color:#3c3c3c;width:19.79px;left:505.30px;">AとB</div>
<div class="t j" style="top:442.29px;font-size:8.35px;line-height:10.02px;color:#3c3c3c;width:29.52px;left:438.60px;">OR関数</div>
<div class="t j" style="top:442.29px;font-size:8.35px;line-height:10.02px;color:#3c3c3c;width:36.49px;left:505.30px;">AまたはB</div>
<div class="t j" style="top:456.25px;font-size:8.35px;line-height:10.02px;color:#3c3c3c;width:34.63px;left:438.60px;">NOT関数</div>
<div class="t j" style="top:456.25px;font-size:8.35px;line-height:10.02px;color:#3c3c3c;width:39.27px;left:505.30px;">Aではない</div>
<div class="t" style="top:121.84px;font-size:8.6px;line-height:10.32px;color:#4a4a4a;left:-33.80px;width:300px;text-align:center;">A</div>
<div class="t" style="top:121.84px;font-size:8.6px;line-height:10.32px;color:#4a4a4a;left:6.00px;width:300px;text-align:center;">B</div>
<div class="t" style="top:121.84px;font-size:8.6px;line-height:10.32px;color:#4a4a4a;left:45.75px;width:300px;text-align:center;">C</div>
<div class="t" style="top:121.84px;font-size:8.6px;line-height:10.32px;color:#217346;left:85.55px;width:300px;text-align:center;">D</div>
<div class="t" style="top:121.84px;font-size:8.6px;line-height:10.32px;color:#4a4a4a;left:125.45px;width:300px;text-align:center;">E</div>
<div class="t" style="top:121.84px;font-size:8.6px;line-height:10.32px;color:#4a4a4a;left:165.35px;width:300px;text-align:center;">F</div>
<div class="t" style="top:121.84px;font-size:8.6px;line-height:10.32px;color:#4a4a4a;left:205.30px;width:300px;text-align:center;">G</div>
<div class="t" style="top:121.84px;font-size:8.6px;line-height:10.32px;color:#4a4a4a;left:245.10px;width:300px;text-align:center;">H</div>
<div class="t" style="top:121.84px;font-size:8.6px;line-height:10.32px;color:#4a4a4a;left:275.85px;width:300px;text-align:center;">I</div>
<div class="t" style="top:121.84px;font-size:8.6px;line-height:10.32px;color:#4a4a4a;left:320.15px;width:300px;text-align:center;">J</div>
<div class="t" style="top:121.84px;font-size:8.6px;line-height:10.32px;color:#4a4a4a;left:385.95px;width:300px;text-align:center;">K</div>
<div class="t" style="top:121.84px;font-size:8.6px;line-height:10.32px;color:#4a4a4a;left:478.25px;width:300px;text-align:center;">L</div>
<div class="t" style="top:121.84px;font-size:8.6px;line-height:10.32px;color:#4a4a4a;left:561.85px;width:300px;text-align:center;">M</div>
<div class="t" style="top:121.84px;font-size:8.6px;line-height:10.32px;color:#4a4a4a;left:592.45px;width:300px;text-align:center;">N</div>
<div class="t" style="top:121.84px;font-size:8.6px;line-height:10.32px;color:#4a4a4a;left:623.35px;width:300px;text-align:center;">O</div>
<div class="t" style="top:121.84px;font-size:8.6px;line-height:10.32px;color:#4a4a4a;left:680.35px;width:300px;text-align:center;">P</div>
<div class="t" style="top:121.84px;font-size:8.6px;line-height:10.32px;color:#4a4a4a;left:733.35px;width:300px;text-align:center;">Q</div>
<div class="t" style="top:121.84px;font-size:8.6px;line-height:10.32px;color:#4a4a4a;left:773.20px;width:300px;text-align:center;">R</div>
<div class="t" style="top:135.54px;font-size:8.4px;line-height:10.08px;color:#444;left:-61.00px;width:300px;text-align:center;">1</div>
<div class="t" style="top:149.50px;font-size:8.4px;line-height:10.08px;color:#444;left:-61.00px;width:300px;text-align:center;">2</div>
<div class="t" style="top:163.46px;font-size:8.4px;line-height:10.08px;color:#444;left:-61.00px;width:300px;text-align:center;">3</div>
<div class="t" style="top:177.42px;font-size:8.4px;line-height:10.08px;color:#444;left:-61.00px;width:300px;text-align:center;">4</div>
<div class="t" style="top:191.38px;font-size:8.4px;line-height:10.08px;color:#444;left:-61.00px;width:300px;text-align:center;">5</div>
<div class="t" style="top:205.34px;font-size:8.4px;line-height:10.08px;color:#444;left:-61.00px;width:300px;text-align:center;">6</div>
<div class="t" style="top:219.30px;font-size:8.4px;line-height:10.08px;color:#444;left:-61.00px;width:300px;text-align:center;">7</div>
<div class="t" style="top:233.26px;font-size:8.4px;line-height:10.08px;color:#444;left:-61.00px;width:300px;text-align:center;">8</div>
<div class="t" style="top:247.22px;font-size:8.4px;line-height:10.08px;color:#217346;left:-61.00px;width:300px;text-align:center;">9</div>
<div class="t" style="top:261.18px;font-size:8.4px;line-height:10.08px;color:#444;left:-61.00px;width:300px;text-align:center;">10</div>
<div class="t" style="top:275.14px;font-size:8.4px;line-height:10.08px;color:#444;left:-61.00px;width:300px;text-align:center;">11</div>
<div class="t" style="top:289.10px;font-size:8.4px;line-height:10.08px;color:#444;left:-61.00px;width:300px;text-align:center;">12</div>
<div class="t" style="top:303.06px;font-size:8.4px;line-height:10.08px;color:#444;left:-61.00px;width:300px;text-align:center;">13</div>
<div class="t" style="top:317.02px;font-size:8.4px;line-height:10.08px;color:#444;left:-61.00px;width:300px;text-align:center;">14</div>
<div class="t" style="top:330.98px;font-size:8.4px;line-height:10.08px;color:#444;left:-61.00px;width:300px;text-align:center;">15</div>
<div class="t" style="top:344.94px;font-size:8.4px;line-height:10.08px;color:#444;left:-61.00px;width:300px;text-align:center;">16</div>
<div class="t" style="top:358.90px;font-size:8.4px;line-height:10.08px;color:#444;left:-61.00px;width:300px;text-align:center;">17</div>
<div class="t" style="top:372.86px;font-size:8.4px;line-height:10.08px;color:#444;left:-61.00px;width:300px;text-align:center;">18</div>
<div class="t" style="top:386.82px;font-size:8.4px;line-height:10.08px;color:#444;left:-61.00px;width:300px;text-align:center;">19</div>
<div class="t" style="top:400.78px;font-size:8.4px;line-height:10.08px;color:#444;left:-61.00px;width:300px;text-align:center;">20</div>
<div class="t" style="top:414.74px;font-size:8.4px;line-height:10.08px;color:#444;left:-61.00px;width:300px;text-align:center;">21</div>
<div class="t" style="top:428.70px;font-size:8.4px;line-height:10.08px;color:#444;left:-61.00px;width:300px;text-align:center;">22</div>
<div class="t" style="top:442.66px;font-size:8.4px;line-height:10.08px;color:#444;left:-61.00px;width:300px;text-align:center;">23</div>
<div class="t" style="top:456.62px;font-size:8.4px;line-height:10.08px;color:#444;left:-61.00px;width:300px;text-align:center;">24</div>
<div class="t" style="top:470.58px;font-size:8.4px;line-height:10.08px;color:#444;left:-61.00px;width:300px;text-align:center;">25</div>
<div class="t" style="top:484.54px;font-size:8.4px;line-height:10.08px;color:#444;left:-61.00px;width:300px;text-align:center;">26</div>
<div class="t" style="top:498.50px;font-size:8.4px;line-height:10.08px;color:#444;left:-61.00px;width:300px;text-align:center;">27</div>
<div class="t" style="top:512.46px;font-size:8.4px;line-height:10.08px;color:#444;left:-61.00px;width:300px;text-align:center;">28</div>
<div style="position:absolute;left:223.200px;top:260.800px;width:133.400px;height:9px;background:#fff;box-shadow:0 0 0 .6px #c6c6c6,0.5px 0.8px 1.5px rgba(0,0,0,.25);"></div>
<div class="t j" style="top:261.42px;font-size:6.8px;line-height:8.16px;color:#777;width:112.13px;left:226.70px;transform:scaleX(1.120);transform-origin:left center;">OR(論理式1, <span style="color:#1a1a1a;-webkit-text-stroke:.18px #1a1a1a">[論理式2]</span>, [論理式3], ...)</div>
<div class="t j" style="top:6.00px;font-size:7px;line-height:8.40px;color:#fff;width:143.05px;left:440.13px;transform:scaleX(1.030);transform-origin:center center;">MoA Excel [35] OR関数の使い方.xlsx &nbsp;- &nbsp;Excel</div>
<div class="t j" style="top:23.76px;font-size:7.4px;line-height:8.88px;color:#444;width:29.90px;left:87.50px;transform:scaleX(0.743);transform-origin:left center;">ファイル</div>
<div class="t j" style="top:23.76px;font-size:7.4px;line-height:8.88px;color:#444;width:15.10px;left:160.50px;transform:scaleX(1.014);transform-origin:left center;">挿入</div>
<div class="t j" style="top:23.76px;font-size:7.4px;line-height:8.88px;color:#444;width:61.56px;left:191.00px;transform:scaleX(0.816);transform-origin:left center;">ページ レイアウト</div>
<div class="t j" style="top:23.76px;font-size:7.4px;line-height:8.88px;color:#444;width:15.10px;left:258.00px;transform:scaleX(0.980);transform-origin:left center;">数式</div>
<div class="t j" style="top:23.76px;font-size:7.4px;line-height:8.88px;color:#444;width:22.50px;left:288.80px;transform:scaleX(0.824);transform-origin:left center;">データ</div>
<div class="t j" style="top:23.76px;font-size:7.4px;line-height:8.88px;color:#444;width:15.10px;left:322.00px;transform:scaleX(1.014);transform-origin:left center;">校閲</div>
<div class="t j" style="top:23.76px;font-size:7.4px;line-height:8.88px;color:#444;width:15.10px;left:352.50px;transform:scaleX(1.014);transform-origin:left center;">表示</div>
<div class="t j" style="top:23.76px;font-size:7.4px;line-height:8.88px;color:#444;width:22.50px;left:382.50px;transform:scaleX(0.878);transform-origin:left center;">ヘルプ</div>
<div class="t j" style="top:23.76px;font-size:7.4px;line-height:8.88px;color:#444;width:41.43px;left:418.80px;transform:scaleX(1.075);transform-origin:left center;">PDFelement</div>
<div class="t j" style="top:23.76px;font-size:7.4px;line-height:8.88px;color:#444;width:44.70px;left:503.80px;transform:scaleX(0.833);transform-origin:left center;">何をしますか</div>
<div class="t j" style="top:23.76px;font-size:7.4px;line-height:8.88px;color:#222;font-weight:bold;width:22.50px;left:125.50px;transform:scaleX(0.901);transform-origin:left center;">ホーム</div>
<div class="t j" style="top:23.88px;font-size:7.2px;line-height:8.64px;color:#217346;font-weight:bold;width:14.70px;left:916.80px;transform:scaleX(0.986);transform-origin:left center;">共有</div>
<div class="t j" style="top:83.46px;font-size:6.9px;line-height:8.28px;color:#444;width:48.60px;left:107.35px;transform:scaleX(0.698);transform-origin:center center;">クリップボード</div>
<div class="t j" style="top:83.46px;font-size:6.9px;line-height:8.28px;color:#444;width:27.90px;left:248.90px;transform:scaleX(0.678);transform-origin:center center;">フォント</div>
<div class="t j" style="top:83.46px;font-size:6.9px;line-height:8.28px;color:#444;width:14.10px;left:417.50px;transform:scaleX(0.942);transform-origin:center center;">配置</div>
<div class="t j" style="top:83.46px;font-size:6.9px;line-height:8.28px;color:#444;width:14.10px;left:546.10px;transform:scaleX(0.964);transform-origin:center center;">数値</div>
<div class="t j" style="top:83.46px;font-size:6.9px;line-height:8.28px;color:#444;width:27.90px;left:639.70px;transform:scaleX(0.746);transform-origin:center center;">スタイル</div>
<div class="t j" style="top:83.46px;font-size:6.9px;line-height:8.28px;color:#444;width:14.10px;left:741.10px;transform:scaleX(0.768);transform-origin:center center;">セル</div>
<div class="t j" style="top:83.46px;font-size:6.9px;line-height:8.28px;color:#444;width:14.10px;left:843.50px;transform:scaleX(0.957);transform-origin:center center;">編集</div>
<div class="t j" style="top:60.86px;font-size:6.9px;line-height:8.28px;color:#444;width:27.90px;left:83.70px;transform:scaleX(0.833);transform-origin:center center;">貼り付け</div>
<div class="t j" style="top:41.86px;font-size:6.9px;line-height:8.28px;color:#444;width:27.90px;left:123.40px;transform:scaleX(0.804);transform-origin:left center;">切り取り</div>
<div class="t j" style="top:55.66px;font-size:6.9px;line-height:8.28px;color:#444;width:21.00px;left:123.40px;transform:scaleX(0.696);transform-origin:left center;">コピー</div>
<div class="t j" style="top:69.46px;font-size:6.9px;line-height:8.28px;color:#b2b2b2;width:71.22px;left:123.40px;transform:scaleX(0.860);transform-origin:left center;">書式のコピー/貼り付け</div>
<div class="t" style="top:46.40px;font-size:7px;line-height:8.40px;color:#a8a8a8;left:295.00px;">11</div>
<div class="t" style="top:45.20px;font-size:9px;line-height:10.80px;color:#7d7d7d;left:314.50px;">A</div>
<div class="t" style="top:46.40px;font-size:8px;line-height:9.60px;color:#7d7d7d;left:328.50px;">A</div>
<div class="t" style="top:63.50px;font-size:8px;line-height:9.60px;color:#8c8c8c;font-weight:bold;left:53.60px;width:300px;text-align:center;">B</div>
<div class="t" style="top:63.50px;font-size:8px;line-height:9.60px;color:#8c8c8c;font-weight:normal;left:66.50px;width:300px;text-align:center;font-family:"Liberation Serif",serif;"><i>I</i></div>
<div class="t" style="top:63.30px;font-size:8px;line-height:9.60px;color:#8c8c8c;font-weight:normal;left:79.40px;width:300px;text-align:center;text-decoration:underline;">U</div>
<div class="t" style="top:62.84px;font-size:8.6px;line-height:10.32px;color:#9c9c9c;left:149.40px;width:300px;text-align:center;">A</div>
<div class="t j" style="top:46.26px;font-size:6.9px;line-height:8.28px;color:#b2b2b2;width:83.10px;left:432.30px;transform:scaleX(0.864);transform-origin:left center;">折り返して全体を表示する</div>
<div class="t j" style="top:64.86px;font-size:6.9px;line-height:8.28px;color:#b2b2b2;width:76.20px;left:432.30px;transform:scaleX(0.875);transform-origin:left center;">セルを結合して中央揃え</div>
<div class="t j" style="top:46.46px;font-size:6.9px;line-height:8.28px;color:#b0b0b0;width:14.10px;left:521.80px;transform:scaleX(0.928);transform-origin:left center;">標準</div>
<div class="t" style="top:63.56px;font-size:8.4px;line-height:10.08px;color:#8c8c8c;left:397.80px;width:300px;text-align:center;">%</div>
<div class="t" style="top:60.60px;font-size:11px;line-height:13.20px;color:#8c8c8c;font-weight:bold;left:411.00px;width:300px;text-align:center;">,</div>
<div class="t" style="top:64.16px;font-size:3.9px;line-height:4.68px;color:#9a9a9a;left:426.80px;width:300px;text-align:center;">←.0</div>
<div class="t" style="top:68.46px;font-size:3.9px;line-height:4.68px;color:#9a9a9a;left:426.80px;width:300px;text-align:center;">.00</div>
<div class="t" style="top:64.16px;font-size:3.9px;line-height:4.68px;color:#9a9a9a;left:440.00px;width:300px;text-align:center;">.00</div>
<div class="t j" style="top:68.46px;font-size:3.9px;line-height:4.68px;color:#9a9a9a;width:7.45px;left:586.42px;">→.0</div>
<div class="t j" style="top:59.86px;font-size:6.9px;line-height:8.28px;color:#b2b2b2;width:27.90px;left:605.00px;transform:scaleX(0.906);transform-origin:center center;">条件付き</div>
<div class="t j" style="top:68.86px;font-size:6.9px;line-height:8.28px;color:#b2b2b2;width:14.10px;left:609.60px;transform:scaleX(0.957);transform-origin:center center;">書式</div>
<div class="t j" style="top:59.86px;font-size:6.9px;line-height:8.28px;color:#b2b2b2;width:48.60px;left:628.85px;transform:scaleX(0.741);transform-origin:center center;">テーブルとして</div>
<div class="t j" style="top:68.86px;font-size:6.9px;line-height:8.28px;color:#b2b2b2;width:27.90px;left:636.80px;transform:scaleX(1.014);transform-origin:center center;">書式設定</div>
<div class="t j" style="top:59.86px;font-size:6.9px;line-height:8.28px;color:#b2b2b2;width:21.00px;left:678.25px;transform:scaleX(0.812);transform-origin:center center;">セルの</div>
<div class="t j" style="top:68.86px;font-size:6.9px;line-height:8.28px;color:#b2b2b2;width:27.90px;left:670.60px;transform:scaleX(0.725);transform-origin:center center;">スタイル</div>
<div class="t j" style="top:59.86px;font-size:6.9px;line-height:8.28px;color:#b2b2b2;width:14.10px;left:717.70px;transform:scaleX(0.957);transform-origin:center center;">挿入</div>
<div class="t j" style="top:59.86px;font-size:6.9px;line-height:8.28px;color:#b2b2b2;width:14.10px;left:741.50px;transform:scaleX(0.964);transform-origin:center center;">削除</div>
<div class="t j" style="top:59.86px;font-size:6.9px;line-height:8.28px;color:#b2b2b2;width:14.10px;left:765.20px;transform:scaleX(0.957);transform-origin:center center;">書式</div>
<div class="t" style="top:38.30px;font-size:10.5px;line-height:12.60px;color:#333;font-weight:bold;left:795.60px;">Σ</div>
<div class="t j" style="top:40.96px;font-size:6.9px;line-height:8.28px;color:#444;width:38.25px;left:805.50px;transform:scaleX(0.843);transform-origin:left center;">オート SUM</div>
<div class="t j" style="top:53.66px;font-size:6.9px;line-height:8.28px;color:#b2b2b2;width:21.00px;left:806.00px;transform:scaleX(0.628);transform-origin:left center;">フィル</div>
<div class="t j" style="top:66.26px;font-size:6.9px;line-height:8.28px;color:#444;width:21.00px;left:806.00px;transform:scaleX(0.657);transform-origin:left center;">クリア</div>
<div class="t j" style="top:59.86px;font-size:6.9px;line-height:8.28px;color:#b2b2b2;width:34.80px;left:850.75px;transform:scaleX(0.812);transform-origin:center center;">並べ替えと</div>
<div class="t j" style="top:68.66px;font-size:6.9px;line-height:8.28px;color:#b2b2b2;width:34.80px;left:847.35px;transform:scaleX(0.716);transform-origin:center center;">フィルター</div>
<div class="t j" style="top:59.86px;font-size:6.9px;line-height:8.28px;color:#444;width:21.00px;left:886.85px;transform:scaleX(0.845);transform-origin:center center;">検索と</div>
<div class="t j" style="top:68.66px;font-size:6.9px;line-height:8.28px;color:#444;width:14.10px;left:887.00px;transform:scaleX(0.957);transform-origin:center center;">選択</div>
<div class="t j" style="top:101.74px;font-size:8.6px;line-height:10.32px;color:#444;width:11.29px;left:85.60px;transform:scaleX(0.901);transform-origin:left center;">C9</div>
<div class="t" style="top:101.00px;font-size:9px;line-height:10.80px;color:#444;font-weight:normal;left:61.40px;width:300px;text-align:center;font-family:"Liberation Serif",serif;"><i>f</i><span style="font-size:6px">x</span></div>
<div class="t j" style="top:101.30px;font-size:9px;line-height:10.80px;color:#444;width:72.47px;left:231.70px;transform:scaleX(0.981);transform-origin:left center;">=OR(B9="<span style="display:inline-block;width:5.7px;height:5.7px;border:0.6px solid #606060;border-radius:50%;vertical-align:-0.6px;margin:0 0.8px"></span>",C9=</div>
<div class="t j" style="top:528.80px;font-size:8px;line-height:9.60px;color:#217346;width:25.66px;left:127.22px;transform:scaleX(1.025);transform-origin:center center;">Sheet1</div>
<div class="t j" style="top:543.32px;font-size:6.8px;line-height:8.16px;color:#555;width:13.90px;left:84.75px;transform:scaleX(0.938);transform-origin:left center;">入力</div>
<div class="t j" style="top:542.82px;font-size:6.8px;line-height:8.16px;color:#444;width:27.50px;left:731.70px;transform:scaleX(0.967);transform-origin:left center;">表示設定</div>
<div class="t" style="top:542.40px;font-size:7px;line-height:8.40px;color:#b5b5b5;left:692.60px;width:300px;text-align:center;">−</div>
<div class="t" style="top:542.40px;font-size:7px;line-height:8.40px;color:#b5b5b5;left:761.00px;width:300px;text-align:center;">+</div>
<div class="t" style="top:542.60px;font-size:7px;line-height:8.40px;color:#bdbdbd;left:780.20px;width:300px;text-align:center;">100%</div>
<div class="t j" style="top:560.32px;font-size:7.8px;line-height:9.36px;color:#3a3a3a;width:70.50px;left:130.60px;transform:scaleX(0.934);transform-origin:left center;">ここに入力して検索</div>
<div class="t" style="top:560.08px;font-size:7.2px;line-height:8.64px;color:#e8e8e8;left:679.60px;">31°C</div>
<div class="t j" style="top:557.20px;font-size:12px;line-height:14.40px;color:#f0f0f0;width:74.33px;left:745.40px;transform:scaleX(0.966);transform-origin:left center;-webkit-text-stroke:.25px #f0f0f0;">©2021 saym.</div>
<div class="t" style="top:559.44px;font-size:8.6px;line-height:10.32px;color:#fff;font-weight:bold;left:692.60px;width:300px;text-align:center;font-family:"Liberation Serif",serif;">A</div>
<div class="t" style="top:555.40px;font-size:7px;line-height:8.40px;color:#f0f0f0;left:741.80px;width:300px;text-align:center;">14:58</div>
<div class="t" style="top:565.40px;font-size:7px;line-height:8.40px;color:#f0f0f0;left:741.80px;width:300px;text-align:center;">2021/08/20</div>
<div class="t" style="top:45.44px;font-size:4.6px;line-height:5.52px;color:#a8a8a8;left:275.20px;width:300px;text-align:center;">ab</div>
<div class="t" style="top:40.56px;font-size:7.4px;line-height:8.88px;color:#b0b0b0;left:713.20px;width:300px;text-align:center;">A</div>
<div class="t" style="top:47.66px;font-size:7.4px;line-height:8.88px;color:#b0b0b0;left:713.20px;width:300px;text-align:center;">Z</div>
</div>
<svg width="1024" height="576" viewBox="0 0 1024 576" style="text-rendering:geometricPrecision"><rect x="98.7" y="364.1" width="332.5" height="164" fill="#fb0007"/>
<rect x="103.3" y="368.7" width="322.6" height="24.1" fill="#fff"/>
<rect x="103.3" y="397.700" width="322.6" height="125.8" fill="#fff"/>
<rect x="104" y="398.400" width="321.200" height="124.400" rx="5" fill="#fff" stroke="#b8b8b8" stroke-width=".5"/>
<rect x="110.30" y="403.60" width="16.60" height="11.00" rx="2.2" fill="#fff" stroke="#707070" stroke-width=".75"/>
<rect x="111.30" y="404.60" width="14.60" height="9.00" rx="1.5" fill="none" stroke="#cfcfcf" stroke-width=".5"/>
<text x="112.89999999999999" y="411" font-size="5.3" font-family="Liberation Sans, sans-serif" fill="#1e1e1e">ESC</text>
<rect x="129.50" y="403.60" width="16.10" height="11.00" rx="2.2" fill="#fff" stroke="#707070" stroke-width=".75"/>
<rect x="130.50" y="404.60" width="14.10" height="9.00" rx="1.5" fill="none" stroke="#cfcfcf" stroke-width=".5"/>
<text x="132.1" y="411" font-size="5.3" font-family="Liberation Sans, sans-serif" fill="#1e1e1e">F1</text>
<rect x="148.50" y="403.60" width="16.20" height="11.00" rx="2.2" fill="#fff" stroke="#707070" stroke-width=".75"/>
<rect x="149.50" y="404.60" width="14.20" height="9.00" rx="1.5" fill="none" stroke="#cfcfcf" stroke-width=".5"/>
<text x="151.1" y="411" font-size="5.3" font-family="Liberation Sans, sans-serif" fill="#1e1e1e">F2</text>
<rect x="167.60" y="403.60" width="16.20" height="11.00" rx="2.2" fill="#fff" stroke="#707070" stroke-width=".75"/>
<rect x="168.60" y="404.60" width="14.20" height="9.00" rx="1.5" fill="none" stroke="#cfcfcf" stroke-width=".5"/>
<text x="170.2" y="411" font-size="5.3" font-family="Liberation Sans, sans-serif" fill="#1e1e1e">F3</text>
<rect x="186.60" y="403.60" width="16.20" height="11.00" rx="2.2" fill="#fff" stroke="#707070" stroke-width=".75"/>
<rect x="187.60" y="404.60" width="14.20" height="9.00" rx="1.5" fill="none" stroke="#cfcfcf" stroke-width=".5"/>
<text x="189.2" y="411" font-size="5.3" font-family="Liberation Sans, sans-serif" fill="#1e1e1e">F4</text>
<rect x="205.60" y="403.60" width="16.20" height="11.00" rx="2.2" fill="#fff" stroke="#707070" stroke-width=".75"/>
<rect x="206.60" y="404.60" width="14.20" height="9.00" rx="1.5" fill="none" stroke="#cfcfcf" stroke-width=".5"/>
<text x="208.2" y="411" font-size="5.3" font-family="Liberation Sans, sans-serif" fill="#1e1e1e">F5</text>
<rect x="224.70" y="403.60" width="16.20" height="11.00" rx="2.2" fill="#fff" stroke="#707070" stroke-width=".75"/>
<rect x="225.70" y="404.60" width="14.20" height="9.00" rx="1.5" fill="none" stroke="#cfcfcf" stroke-width=".5"/>
<text x="227.29999999999998" y="411" font-size="5.3" font-family="Liberation Sans, sans-serif" fill="#1e1e1e">F6</text>
<rect x="243.70" y="403.60" width="16.20" height="11.00" rx="2.2" fill="#fff" stroke="#707070" stroke-width=".75"/>
<rect x="244.70" y="404.60" width="14.20" height="9.00" rx="1.5" fill="none" stroke="#cfcfcf" stroke-width=".5"/>
<text x="246.29999999999998" y="411" font-size="5.3" font-family="Liberation Sans, sans-serif" fill="#1e1e1e">F7</text>
<rect x="262.70" y="403.60" width="15.60" height="11.00" rx="2.2" fill="#fff" stroke="#707070" stroke-width=".75"/>
<rect x="263.70" y="404.60" width="13.60" height="9.00" rx="1.5" fill="none" stroke="#cfcfcf" stroke-width=".5"/>
<text x="265.3" y="411" font-size="5.3" font-family="Liberation Sans, sans-serif" fill="#1e1e1e">F8</text>
<rect x="281.60" y="403.60" width="15.60" height="11.00" rx="2.2" fill="#fff" stroke="#707070" stroke-width=".75"/>
<rect x="282.60" y="404.60" width="13.60" height="9.00" rx="1.5" fill="none" stroke="#cfcfcf" stroke-width=".5"/>
<text x="284.20000000000005" y="411" font-size="5.3" font-family="Liberation Sans, sans-serif" fill="#1e1e1e">F9</text>
<rect x="300.50" y="403.60" width="15.80" height="11.00" rx="2.2" fill="#fff" stroke="#707070" stroke-width=".75"/>
<rect x="301.50" y="404.60" width="13.80" height="9.00" rx="1.5" fill="none" stroke="#cfcfcf" stroke-width=".5"/>
<text x="303.1" y="411" font-size="5.3" font-family="Liberation Sans, sans-serif" fill="#1e1e1e">F10</text>
<rect x="319.30" y="403.60" width="15.70" height="11.00" rx="2.2" fill="#fff" stroke="#707070" stroke-width=".75"/>
<rect x="320.30" y="404.60" width="13.70" height="9.00" rx="1.5" fill="none" stroke="#cfcfcf" stroke-width=".5"/>
<text x="321.90000000000003" y="411" font-size="5.3" font-family="Liberation Sans, sans-serif" fill="#1e1e1e">F11</text>
<rect x="338.40" y="403.60" width="15.70" height="11.00" rx="2.2" fill="#fff" stroke="#707070" stroke-width=".75"/>
<rect x="339.40" y="404.60" width="13.70" height="9.00" rx="1.5" fill="none" stroke="#cfcfcf" stroke-width=".5"/>
<text x="341.0" y="411" font-size="5.3" font-family="Liberation Sans, sans-serif" fill="#1e1e1e">F12</text>
<rect x="357.50" y="403.60" width="17.40" height="11.00" rx="2.2" fill="#fff" stroke="#707070" stroke-width=".75"/>
<rect x="358.50" y="404.60" width="15.40" height="9.00" rx="1.5" fill="none" stroke="#cfcfcf" stroke-width=".5"/>
<text x="359.5" y="408.6" font-size="4.2" font-family="Liberation Sans, sans-serif" fill="#1e1e1e">Pause</text><text x="359.5" y="412.6" font-size="4.2" font-family="Liberation Sans, sans-serif" fill="#1e1e1e">Break</text>
<rect x="378.20" y="403.60" width="17.90" height="11.00" rx="2.2" fill="#fff" stroke="#707070" stroke-width=".75"/>
<rect x="379.20" y="404.60" width="15.90" height="9.00" rx="1.5" fill="none" stroke="#cfcfcf" stroke-width=".5"/>
<text x="380.2" y="408.6" font-size="4.2" font-family="Liberation Sans, sans-serif" fill="#1e1e1e">Insert</text><text x="380.2" y="412.6" font-size="4.2" font-family="Liberation Sans, sans-serif" fill="#1e1e1e">PrtScr</text>
<rect x="399.40" y="403.60" width="18.60" height="11.00" rx="2.2" fill="#fff" stroke="#707070" stroke-width=".75"/>
<rect x="400.40" y="404.60" width="16.60" height="9.00" rx="1.5" fill="none" stroke="#cfcfcf" stroke-width=".5"/>
<text x="401.4" y="408.6" font-size="4.2" font-family="Liberation Sans, sans-serif" fill="#1e1e1e">Delete</text><text x="401.4" y="412.6" font-size="4.2" font-family="Liberation Sans, sans-serif" fill="#1e1e1e">SysRq</text>
<rect x="110.30" y="417.40" width="18.20" height="18.30" rx="2.2" fill="#fff" stroke="#707070" stroke-width=".75"/>
<rect x="111.30" y="418.40" width="16.20" height="16.30" rx="1.5" fill="none" stroke="#cfcfcf" stroke-width=".5"/>
<text x="113" y="423.4" font-size="3.6" font-family="Liberation Sans, sans-serif" fill="#1e1e1e">半角/</text>
<text x="113" y="427.8" font-size="3.6" font-family="Liberation Sans, sans-serif" fill="#1e1e1e">全角</text>
<text x="113" y="432.2" font-size="3.6" font-family="Liberation Sans, sans-serif" fill="#1e1e1e">漢字</text>
<rect x="131.20" y="417.40" width="18.10" height="18.30" rx="2.2" fill="#fff" stroke="#707070" stroke-width=".75"/>
<rect x="132.20" y="418.40" width="16.10" height="16.30" rx="1.5" fill="none" stroke="#cfcfcf" stroke-width=".5"/>
<text x="134.40" y="424.60" font-size="4.7" font-family="Liberation Sans, sans-serif" fill="#1e1e1e">!</text>
<text x="134.40" y="432.30" font-size="4.7" font-family="Liberation Sans, sans-serif" fill="#1e1e1e">1</text>
<text x="146.10" y="432.30" font-size="4.7" text-anchor="end" font-family="Liberation Sans, sans-serif" fill="#1e1e1e">ぬ</text>
<rect x="151.70" y="417.40" width="18.30" height="18.30" rx="2.2" fill="#fff" stroke="#707070" stroke-width=".75"/>
<rect x="152.70" y="418.40" width="16.30" height="16.30" rx="1.5" fill="none" stroke="#cfcfcf" stroke-width=".5"/>
<text x="154.90" y="424.60" font-size="4.7" font-family="Liberation Sans, sans-serif" fill="#1e1e1e">&quot;</text>
<text x="154.90" y="432.30" font-size="4.7" font-family="Liberation Sans, sans-serif" fill="#1e1e1e">2</text>
<text x="166.80" y="432.30" font-size="4.7" text-anchor="end" font-family="Liberation Sans, sans-serif" fill="#1e1e1e">ふ</text>
<rect x="172.40" y="417.40" width="18.30" height="18.30" rx="2.2" fill="#fff" stroke="#707070" stroke-width=".75"/>
<rect x="173.40" y="418.40" width="16.30" height="16.30" rx="1.5" fill="none" stroke="#cfcfcf" stroke-width=".5"/>
<text x="175.60" y="424.60" font-size="4.7" font-family="Liberation Sans, sans-serif" fill="#1e1e1e">#</text>
<text x="175.60" y="432.30" font-size="4.7" font-family="Liberation Sans, sans-serif" fill="#1e1e1e">3</text>
<text x="187.50" y="432.30" font-size="4.7" text-anchor="end" font-family="Liberation Sans, sans-serif" fill="#1e1e1e">あ</text>
<text x="187.50" y="424.60" font-size="4.7" text-anchor="end" font-family="Liberation Sans, sans-serif" fill="#1e1e1e">ぁ</text>
<rect x="193.00" y="417.40" width="18.40" height="18.30" rx="2.2" fill="#fff" stroke="#707070" stroke-width=".75"/>
<rect x="194.00" y="418.40" width="16.40" height="16.30" rx="1.5" fill="none" stroke="#cfcfcf" stroke-width=".5"/>
<text x="196.20" y="424.60" font-size="4.7" font-family="Liberation Sans, sans-serif" fill="#1e1e1e">$</text>
<text x="196.20" y="432.30" font-size="4.7" font-family="Liberation Sans, sans-serif" fill="#1e1e1e">4</text>
<text x="208.20" y="432.30" font-size="4.7" text-anchor="end" font-family="Liberation Sans, sans-serif" fill="#1e1e1e">う</text>
<text x="208.20" y="424.60" font-size="4.7" text-anchor="end" font-family="Liberation Sans, sans-serif" fill="#1e1e1e">ぅ</text>
<rect x="213.70" y="417.40" width="18.30" height="18.30" rx="2.2" fill="#fff" stroke="#707070" stroke-width=".75"/>
<rect x="214.70" y="418.40" width="16.30" height="16.30" rx="1.5" fill="none" stroke="#cfcfcf" stroke-width=".5"/>
<text x="216.90" y="424.60" font-size="4.7" font-family="Liberation Sans, sans-serif" fill="#1e1e1e">%</text>
<text x="216.90" y="432.30" font-size="4.7" font-family="Liberation Sans, sans-serif" fill="#1e1e1e">5</text>
<text x="228.80" y="432.30" font-size="4.7" text-anchor="end" font-family="Liberation Sans, sans-serif" fill="#1e1e1e">え</text>
<text x="228.80" y="424.60" font-size="4.7" text-anchor="end" font-family="Liberation Sans, sans-serif" fill="#1e1e1e">ぇ</text>
<rect x="234.40" y="417.40" width="18.30" height="18.30" rx="2.2" fill="#fff" stroke="#707070" stroke-width=".75"/>
<rect x="235.40" y="418.40" width="16.30" height="16.30" rx="1.5" fill="none" stroke="#cfcfcf" stroke-width=".5"/>
<text x="237.60" y="424.60" font-size="4.7" font-family="Liberation Sans, sans-serif" fill="#1e1e1e">&amp;</text>
<text x="237.60" y="432.30" font-size="4.7" font-family="Liberation Sans, sans-serif" fill="#1e1e1e">6</text>
<text x="249.50" y="432.30" font-size="4.7" text-anchor="end" font-family="Liberation Sans, sans-serif" fill="#1e1e1e">お</text>
<text x="249.50" y="424.60" font-size="4.7" text-anchor="end" font-family="Liberation Sans, sans-serif" fill="#1e1e1e">ぉ</text>
<rect x="255.10" y="417.40" width="18.30" height="18.30" rx="2.2" fill="#fff" stroke="#707070" stroke-width=".75"/>
<rect x="256.10" y="418.40" width="16.30" height="16.30" rx="1.5" fill="none" stroke="#cfcfcf" stroke-width=".5"/>
<text x="258.30" y="424.60" font-size="4.7" font-family="Liberation Sans, sans-serif" fill="#1e1e1e">'</text>
<text x="258.30" y="432.30" font-size="4.7" font-family="Liberation Sans, sans-serif" fill="#1e1e1e">7</text>
<text x="270.20" y="432.30" font-size="4.7" text-anchor="end" font-family="Liberation Sans, sans-serif" fill="#1e1e1e">や</text>
<text x="270.20" y="424.60" font-size="4.7" text-anchor="end" font-family="Liberation Sans, sans-serif" fill="#1e1e1e">ゃ</text>
<rect x="276.10" y="417.40" width="17.80" height="18.30" rx="2.2" fill="#fff" stroke="#707070" stroke-width=".75"/>
<rect x="277.10" y="418.40" width="15.80" height="16.30" rx="1.5" fill="none" stroke="#cfcfcf" stroke-width=".5"/>
<text x="279.30" y="424.60" font-size="4.7" font-family="Liberation Sans, sans-serif" fill="#1e1e1e">(</text>
<text x="279.30" y="432.30" font-size="4.7" font-family="Liberation Sans, sans-serif" fill="#1e1e1e">8</text>
<text x="290.70" y="432.30" font-size="4.7" text-anchor="end" font-family="Liberation Sans, sans-serif" fill="#1e1e1e">ゆ</text>
<text x="290.70" y="424.60" font-size="4.7" text-anchor="end" font-family="Liberation Sans, sans-serif" fill="#1e1e1e">ゅ</text>
<rect x="296.40" y="417.40" width="17.90" height="18.30" rx="2.2" fill="#fff" stroke="#707070" stroke-width=".75"/>
<rect x="297.40" y="418.40" width="15.90" height="16.30" rx="1.5" fill="none" stroke="#cfcfcf" stroke-width=".5"/>
<text x="299.60" y="424.60" font-size="4.7" font-family="Liberation Sans, sans-serif" fill="#1e1e1e">)</text>
<text x="299.60" y="432.30" font-size="4.7" font-family="Liberation Sans, sans-serif" fill="#1e1e1e">9</text>
<text x="311.10" y="432.30" font-size="4.7" text-anchor="end" font-family="Liberation Sans, sans-serif" fill="#1e1e1e">よ</text>
<text x="311.10" y="424.60" font-size="4.7" text-anchor="end" font-family="Liberation Sans, sans-serif" fill="#1e1e1e">ょ</text>
<rect x="316.80" y="417.40" width="17.90" height="18.30" rx="2.2" fill="#fff" stroke="#707070" stroke-width=".75"/>
<rect x="317.80" y="418.40" width="15.90" height="16.30" rx="1.5" fill="none" stroke="#cfcfcf" stroke-width=".5"/>
<text x="320.00" y="432.30" font-size="4.7" font-family="Liberation Sans, sans-serif" fill="#1e1e1e">0</text>
<text x="331.50" y="432.30" font-size="4.7" text-anchor="end" font-family="Liberation Sans, sans-serif" fill="#1e1e1e">わ</text>
<text x="331.50" y="424.60" font-size="4.7" text-anchor="end" font-family="Liberation Sans, sans-serif" fill="#1e1e1e">を</text>
<rect x="337.50" y="417.40" width="17.50" height="18.30" rx="2.2" fill="#fff" stroke="#707070" stroke-width=".75"/>
<rect x="338.50" y="418.40" width="15.50" height="16.30" rx="1.5" fill="none" stroke="#cfcfcf" stroke-width=".5"/>
<text x="340.70" y="424.60" font-size="4.7" font-family="Liberation Sans, sans-serif" fill="#1e1e1e">=</text>
<text x="340.70" y="432.30" font-size="4.7" font-family="Liberation Sans, sans-serif" fill="#1e1e1e">−</text>
<text x="351.80" y="432.30" font-size="4.7" text-anchor="end" font-family="Liberation Sans, sans-serif" fill="#1e1e1e">ほ</text>
<rect x="357.80" y="417.40" width="17.90" height="18.30" rx="2.2" fill="#fff" stroke="#707070" stroke-width=".75"/>
<rect x="358.80" y="418.40" width="15.90" height="16.30" rx="1.5" fill="none" stroke="#cfcfcf" stroke-width=".5"/>
<text x="361.00" y="424.60" font-size="4.7" font-family="Liberation Sans, sans-serif" fill="#1e1e1e">~</text>
<text x="361.00" y="432.30" font-size="4.7" font-family="Liberation Sans, sans-serif" fill="#1e1e1e">^</text>
<text x="372.50" y="432.30" font-size="4.7" text-anchor="end" font-family="Liberation Sans, sans-serif" fill="#1e1e1e">へ</text>
<rect x="378.70" y="417.40" width="17.40" height="18.30" rx="2.2" fill="#fff" stroke="#707070" stroke-width=".75"/>
<rect x="379.70" y="418.40" width="15.40" height="16.30" rx="1.5" fill="none" stroke="#cfcfcf" stroke-width=".5"/>
<text x="381.90" y="424.60" font-size="4.7" font-family="Liberation Sans, sans-serif" fill="#1e1e1e">|</text>
<text x="381.90" y="432.30" font-size="4.7" font-family="Liberation Sans, sans-serif" fill="#1e1e1e">¥</text>
<text x="392.90" y="432.30" font-size="4.7" text-anchor="end" font-family="Liberation Sans, sans-serif" fill="#1e1e1e">ー</text>
<rect x="399.40" y="417.40" width="18.60" height="18.30" rx="2.2" fill="#fff" stroke="#707070" stroke-width=".75"/>
<rect x="400.40" y="418.40" width="16.60" height="16.30" rx="1.5" fill="none" stroke="#cfcfcf" stroke-width=".5"/>
<text x="408.7" y="425.4" font-size="5.2" text-anchor="middle" font-family="Liberation Sans, sans-serif" fill="#1e1e1e">Back</text><text x="408.7" y="430.2" font-size="5.2" text-anchor="middle" font-family="Liberation Sans, sans-serif" fill="#1e1e1e">space</text>
<rect x="110.30" y="437.80" width="33.20" height="18.30" rx="2.2" fill="#fff" stroke="#707070" stroke-width=".75"/>
<rect x="111.30" y="438.80" width="31.20" height="16.30" rx="1.5" fill="none" stroke="#cfcfcf" stroke-width=".5"/>
<text x="114" y="445.4" font-size="6.4" font-family="Liberation Sans, sans-serif" fill="#1e1e1e">Tab</text><path d="M114.600 446.4v3.200M114.900 448h8.600M118 446.800l-2.800 1.200 2.800 1.200zM129.400 450v3.200M129.100 451.600h-9.800M126 450.400l2.800 1.200-2.800 1.200z" stroke="#222" stroke-width=".6" fill="#222"/>
<rect x="146.10" y="437.80" width="17.90" height="18.30" rx="2.2" fill="#fff" stroke="#707070" stroke-width=".75"/>
<rect x="147.10" y="438.80" width="15.90" height="16.30" rx="1.5" fill="none" stroke="#cfcfcf" stroke-width=".5"/>
<text x="149.30" y="445.00" font-size="5.2" font-family="Liberation Sans, sans-serif" fill="#1e1e1e">Q</text>
<text x="160.80" y="452.70" font-size="5.2" text-anchor="end" font-family="Liberation Sans, sans-serif" fill="#1e1e1e">た</text>
<rect x="166.40" y="437.80" width="18.30" height="18.30" rx="2.2" fill="#fff" stroke="#707070" stroke-width=".75"/>
<rect x="167.40" y="438.80" width="16.30" height="16.30" rx="1.5" fill="none" stroke="#cfcfcf" stroke-width=".5"/>
<text x="169.60" y="445.00" font-size="5.2" font-family="Liberation Sans, sans-serif" fill="#1e1e1e">W</text>
<text x="181.50" y="452.70" font-size="5.2" text-anchor="end" font-family="Liberation Sans, sans-serif" fill="#1e1e1e">て</text>
<rect x="187.20" y="437.80" width="18.20" height="18.30" rx="2.2" fill="#fff" stroke="#707070" stroke-width=".75"/>
<rect x="188.20" y="438.80" width="16.20" height="16.30" rx="1.5" fill="none" stroke="#cfcfcf" stroke-width=".5"/>
<text x="190.40" y="445.00" font-size="5.2" font-family="Liberation Sans, sans-serif" fill="#1e1e1e">E</text>
<text x="202.20" y="452.70" font-size="5.2" text-anchor="end" font-family="Liberation Sans, sans-serif" fill="#1e1e1e">い</text>
<rect x="207.60" y="437.80" width="18.20" height="18.30" rx="2.2" fill="#fff" stroke="#707070" stroke-width=".75"/>
<rect x="208.60" y="438.80" width="16.20" height="16.30" rx="1.5" fill="none" stroke="#cfcfcf" stroke-width=".5"/>
<text x="210.80" y="445.00" font-size="5.2" font-family="Liberation Sans, sans-serif" fill="#1e1e1e">R</text>
<text x="222.60" y="452.70" font-size="5.2" text-anchor="end" font-family="Liberation Sans, sans-serif" fill="#1e1e1e">す</text>
<rect x="228.20" y="437.80" width="17.80" height="18.30" rx="2.2" fill="#fff" stroke="#707070" stroke-width=".75"/>
<rect x="229.20" y="438.80" width="15.80" height="16.30" rx="1.5" fill="none" stroke="#cfcfcf" stroke-width=".5"/>
<text x="231.40" y="445.00" font-size="5.2" font-family="Liberation Sans, sans-serif" fill="#1e1e1e">T</text>
<text x="242.80" y="452.70" font-size="5.2" text-anchor="end" font-family="Liberation Sans, sans-serif" fill="#1e1e1e">か</text>
<rect x="248.60" y="437.80" width="17.90" height="18.30" rx="2.2" fill="#fff" stroke="#707070" stroke-width=".75"/>
<rect x="249.60" y="438.80" width="15.90" height="16.30" rx="1.5" fill="none" stroke="#cfcfcf" stroke-width=".5"/>
<text x="251.80" y="445.00" font-size="5.2" font-family="Liberation Sans, sans-serif" fill="#1e1e1e">Y</text>
<text x="263.30" y="452.70" font-size="5.2" text-anchor="end" font-family="Liberation Sans, sans-serif" fill="#1e1e1e">ん</text>
<rect x="269.50" y="437.80" width="17.40" height="18.30" rx="2.2" fill="#fff" stroke="#707070" stroke-width=".75"/>
<rect x="270.50" y="438.80" width="15.40" height="16.30" rx="1.5" fill="none" stroke="#cfcfcf" stroke-width=".5"/>
<text x="272.70" y="445.00" font-size="5.2" font-family="Liberation Sans, sans-serif" fill="#1e1e1e">U</text>
<text x="283.70" y="452.70" font-size="5.2" text-anchor="end" font-family="Liberation Sans, sans-serif" fill="#1e1e1e">な</text>
<rect x="289.90" y="437.80" width="17.70" height="18.30" rx="2.2" fill="#fff" stroke="#707070" stroke-width=".75"/>
<rect x="290.90" y="438.80" width="15.70" height="16.30" rx="1.5" fill="none" stroke="#cfcfcf" stroke-width=".5"/>
<text x="293.10" y="445.00" font-size="5.2" font-family="Liberation Sans, sans-serif" fill="#1e1e1e">I</text>
<text x="304.40" y="452.70" font-size="5.2" text-anchor="end" font-family="Liberation Sans, sans-serif" fill="#1e1e1e">に</text>
<rect x="310.60" y="437.80" width="17.80" height="18.30" rx="2.2" fill="#fff" stroke="#707070" stroke-width=".75"/>
<rect x="311.60" y="438.80" width="15.80" height="16.30" rx="1.5" fill="none" stroke="#cfcfcf" stroke-width=".5"/>
<text x="313.80" y="445.00" font-size="5.2" font-family="Liberation Sans, sans-serif" fill="#1e1e1e">O</text>
<text x="325.20" y="452.70" font-size="5.2" text-anchor="end" font-family="Liberation Sans, sans-serif" fill="#1e1e1e">ら</text>
<rect x="331.40" y="437.80" width="17.80" height="18.30" rx="2.2" fill="#fff" stroke="#707070" stroke-width=".75"/>
<rect x="332.40" y="438.80" width="15.80" height="16.30" rx="1.5" fill="none" stroke="#cfcfcf" stroke-width=".5"/>
<text x="334.60" y="445.00" font-size="5.2" font-family="Liberation Sans, sans-serif" fill="#1e1e1e">P</text>
<text x="346.00" y="452.70" font-size="5.2" text-anchor="end" font-family="Liberation Sans, sans-serif" fill="#1e1e1e">せ</text>
<rect x="352.00" y="437.80" width="17.60" height="18.30" rx="2.2" fill="#fff" stroke="#707070" stroke-width=".75"/>
<rect x="353.00" y="438.80" width="15.60" height="16.30" rx="1.5" fill="none" stroke="#cfcfcf" stroke-width=".5"/>
<text x="355.20" y="445.00" font-size="4.7" font-family="Liberation Sans, sans-serif" fill="#1e1e1e">`</text>
<text x="355.20" y="452.70" font-size="4.7" font-family="Liberation Sans, sans-serif" fill="#1e1e1e">@</text>
<text x="366.40" y="452.70" font-size="4.7" text-anchor="end" font-family="Liberation Sans, sans-serif" fill="#1e1e1e">゛</text>
<rect x="372.40" y="437.80" width="17.90" height="18.30" rx="2.2" fill="#fff" stroke="#707070" stroke-width=".75"/>
<rect x="373.40" y="438.80" width="15.90" height="16.30" rx="1.5" fill="none" stroke="#cfcfcf" stroke-width=".5"/>
<text x="375.60" y="445.00" font-size="4.7" font-family="Liberation Sans, sans-serif" fill="#1e1e1e">{</text>
<text x="375.60" y="452.70" font-size="4.7" font-family="Liberation Sans, sans-serif" fill="#1e1e1e">[</text>
<text x="387.10" y="452.70" font-size="4.7" text-anchor="end" font-family="Liberation Sans, sans-serif" fill="#1e1e1e">゜</text>
<text x="387.10" y="445.00" font-size="4.7" text-anchor="end" font-family="Liberation Sans, sans-serif" fill="#1e1e1e">「</text>
<path d="M395.300 437.800H415.800a2.200 2.200 0 0 1 2.200 2.200V474a2.200 2.200 0 0 1-2.200 2.200H399a2.200 2.200 0 0 1-2.200-2.200V458.300h-1.500a2.200 2.200 0 0 1-2.200-2.200V440a2.200 2.200 0 0 1 2.200-2.200z" fill="#fff" stroke="#707070" stroke-width=".75"/>
<text x="406.500" y="446.400" font-size="5.6" text-anchor="middle" font-family="Liberation Sans, sans-serif" fill="#1e1e1e">Enter</text><path d="M411.200 447.600v3h-9M404 449.400l-2.800 1.200 2.800 1.200z" stroke="#222" stroke-width=".6" fill="#222"/>
<rect x="110.30" y="458.20" width="37.00" height="18.00" rx="2.2" fill="#fff" stroke="#707070" stroke-width=".75"/>
<rect x="111.30" y="459.20" width="35.00" height="16.00" rx="1.5" fill="none" stroke="#cfcfcf" stroke-width=".5"/>
<text x="113.400" y="465.600" font-size="6.4" font-family="Liberation Sans, sans-serif" fill="#1e1e1e">Caps Lock</text><text x="114" y="470.800" font-size="3.4" font-family="Liberation Sans, sans-serif" fill="#1e1e1e">英数</text>
<rect x="149.80" y="458.20" width="17.90" height="18.00" rx="2.2" fill="#fff" stroke="#707070" stroke-width=".75"/>
<rect x="150.80" y="459.20" width="15.90" height="16.00" rx="1.5" fill="none" stroke="#cfcfcf" stroke-width=".5"/>
<text x="153.00" y="465.40" font-size="5.2" font-family="Liberation Sans, sans-serif" fill="#1e1e1e">A</text>
<text x="164.50" y="472.80" font-size="5.2" text-anchor="end" font-family="Liberation Sans, sans-serif" fill="#1e1e1e">ち</text>
<rect x="170.50" y="458.20" width="17.50" height="18.00" rx="2.2" fill="#fff" stroke="#707070" stroke-width=".75"/>
<rect x="171.50" y="459.20" width="15.50" height="16.00" rx="1.5" fill="none" stroke="#cfcfcf" stroke-width=".5"/>
<text x="173.70" y="465.40" font-size="5.2" font-family="Liberation Sans, sans-serif" fill="#1e1e1e">S</text>
<text x="184.80" y="472.80" font-size="5.2" text-anchor="end" font-family="Liberation Sans, sans-serif" fill="#1e1e1e">と</text>
<rect x="190.80" y="458.20" width="17.90" height="18.00" rx="2.2" fill="#fff" stroke="#707070" stroke-width=".75"/>
<rect x="191.80" y="459.20" width="15.90" height="16.00" rx="1.5" fill="none" stroke="#cfcfcf" stroke-width=".5"/>
<text x="194.00" y="465.40" font-size="5.2" font-family="Liberation Sans, sans-serif" fill="#1e1e1e">D</text>
<text x="205.50" y="472.80" font-size="5.2" text-anchor="end" font-family="Liberation Sans, sans-serif" fill="#1e1e1e">し</text>
<rect x="211.50" y="458.20" width="18.00" height="18.00" rx="2.2" fill="#fff" stroke="#707070" stroke-width=".75"/>
<rect x="212.50" y="459.20" width="16.00" height="16.00" rx="1.5" fill="none" stroke="#cfcfcf" stroke-width=".5"/>
<text x="214.70" y="465.40" font-size="5.2" font-family="Liberation Sans, sans-serif" fill="#1e1e1e">F</text>
<text x="226.30" y="472.80" font-size="5.2" text-anchor="end" font-family="Liberation Sans, sans-serif" fill="#1e1e1e">は</text>
<rect x="232.00" y="458.20" width="17.90" height="18.00" rx="2.2" fill="#fff" stroke="#707070" stroke-width=".75"/>
<rect x="233.00" y="459.20" width="15.90" height="16.00" rx="1.5" fill="none" stroke="#cfcfcf" stroke-width=".5"/>
<text x="235.20" y="465.40" font-size="5.2" font-family="Liberation Sans, sans-serif" fill="#1e1e1e">G</text>
<text x="246.70" y="472.80" font-size="5.2" text-anchor="end" font-family="Liberation Sans, sans-serif" fill="#1e1e1e">き</text>
<rect x="252.70" y="458.20" width="17.70" height="18.00" rx="2.2" fill="#fff" stroke="#707070" stroke-width=".75"/>
<rect x="253.70" y="459.20" width="15.70" height="16.00" rx="1.5" fill="none" stroke="#cfcfcf" stroke-width=".5"/>
<text x="255.90" y="465.40" font-size="5.2" font-family="Liberation Sans, sans-serif" fill="#1e1e1e">H</text>
<text x="267.20" y="472.80" font-size="5.2" text-anchor="end" font-family="Liberation Sans, sans-serif" fill="#1e1e1e">く</text>
<rect x="273.30" y="458.20" width="17.70" height="18.00" rx="2.2" fill="#fff" stroke="#707070" stroke-width=".75"/>
<rect x="274.30" y="459.20" width="15.70" height="16.00" rx="1.5" fill="none" stroke="#cfcfcf" stroke-width=".5"/>
<text x="276.50" y="465.40" font-size="5.2" font-family="Liberation Sans, sans-serif" fill="#1e1e1e">J</text>
<text x="287.80" y="472.80" font-size="5.2" text-anchor="end" font-family="Liberation Sans, sans-serif" fill="#1e1e1e">ま</text>
<rect x="294.00" y="458.20" width="17.80" height="18.00" rx="2.2" fill="#fff" stroke="#707070" stroke-width=".75"/>
<rect x="295.00" y="459.20" width="15.80" height="16.00" rx="1.5" fill="none" stroke="#cfcfcf" stroke-width=".5"/>
<text x="297.20" y="465.40" font-size="5.2" font-family="Liberation Sans, sans-serif" fill="#1e1e1e">K</text>
<text x="308.60" y="472.80" font-size="5.2" text-anchor="end" font-family="Liberation Sans, sans-serif" fill="#1e1e1e">の</text>
<rect x="314.80" y="458.20" width="17.70" height="18.00" rx="2.2" fill="#fff" stroke="#707070" stroke-width=".75"/>
<rect x="315.80" y="459.20" width="15.70" height="16.00" rx="1.5" fill="none" stroke="#cfcfcf" stroke-width=".5"/>
<text x="318.00" y="465.40" font-size="5.2" font-family="Liberation Sans, sans-serif" fill="#1e1e1e">L</text>
<text x="329.30" y="472.80" font-size="5.2" text-anchor="end" font-family="Liberation Sans, sans-serif" fill="#1e1e1e">り</text>
<rect x="335.50" y="458.20" width="17.50" height="18.00" rx="2.2" fill="#fff" stroke="#707070" stroke-width=".75"/>
<rect x="336.50" y="459.20" width="15.50" height="16.00" rx="1.5" fill="none" stroke="#cfcfcf" stroke-width=".5"/>
<text x="338.70" y="465.40" font-size="4.7" font-family="Liberation Sans, sans-serif" fill="#1e1e1e">+</text>
<text x="338.70" y="472.80" font-size="4.7" font-family="Liberation Sans, sans-serif" fill="#1e1e1e">;</text>
<text x="349.80" y="472.80" font-size="4.7" text-anchor="end" font-family="Liberation Sans, sans-serif" fill="#1e1e1e">れ</text>
<rect x="356.10" y="458.20" width="17.40" height="18.00" rx="2.2" fill="#fff" stroke="#707070" stroke-width=".75"/>
<rect x="357.10" y="459.20" width="15.40" height="16.00" rx="1.5" fill="none" stroke="#cfcfcf" stroke-width=".5"/>
<text x="359.30" y="465.40" font-size="4.7" font-family="Liberation Sans, sans-serif" fill="#1e1e1e">*</text>
<text x="359.30" y="472.80" font-size="4.7" font-family="Liberation Sans, sans-serif" fill="#1e1e1e">:</text>
<text x="370.30" y="472.80" font-size="4.7" text-anchor="end" font-family="Liberation Sans, sans-serif" fill="#1e1e1e">け</text>
<rect x="376.50" y="458.20" width="17.80" height="18.00" rx="2.2" fill="#fff" stroke="#707070" stroke-width=".75"/>
<rect x="377.50" y="459.20" width="15.80" height="16.00" rx="1.5" fill="none" stroke="#cfcfcf" stroke-width=".5"/>
<text x="379.70" y="465.40" font-size="4.7" font-family="Liberation Sans, sans-serif" fill="#1e1e1e">}</text>
<text x="379.70" y="472.80" font-size="4.7" font-family="Liberation Sans, sans-serif" fill="#1e1e1e">]</text>
<text x="391.10" y="472.80" font-size="4.7" text-anchor="end" font-family="Liberation Sans, sans-serif" fill="#1e1e1e">む</text>
<text x="391.10" y="465.40" font-size="4.7" text-anchor="end" font-family="Liberation Sans, sans-serif" fill="#1e1e1e">」</text>
<rect x="110.30" y="478.40" width="41.50" height="18.10" rx="2.2" fill="#fff" stroke="#707070" stroke-width=".75"/>
<rect x="111.30" y="479.40" width="39.50" height="16.10" rx="1.5" fill="none" stroke="#cfcfcf" stroke-width=".5"/>
<path d="M115.400 484.600l-3.400 3h1.800v1.800h3.200v-1.800h1.800z" fill="#111"/><text x="120.800" y="489.400" font-size="5.4" font-family="Liberation Sans, sans-serif" fill="#1e1e1e">Shift</text>
<rect x="155.10" y="478.40" width="17.10" height="18.10" rx="2.2" fill="#fff" stroke="#707070" stroke-width=".75"/>
<rect x="156.10" y="479.40" width="15.10" height="16.10" rx="1.5" fill="none" stroke="#cfcfcf" stroke-width=".5"/>
<text x="158.30" y="485.60" font-size="5.2" font-family="Liberation Sans, sans-serif" fill="#1e1e1e">Z</text>
<text x="169.00" y="493.10" font-size="5.2" text-anchor="end" font-family="Liberation Sans, sans-serif" fill="#1e1e1e">つ</text>
<rect x="175.20" y="478.40" width="17.80" height="18.10" rx="2.2" fill="#fff" stroke="#707070" stroke-width=".75"/>
<rect x="176.20" y="479.40" width="15.80" height="16.10" rx="1.5" fill="none" stroke="#cfcfcf" stroke-width=".5"/>
<text x="178.40" y="485.60" font-size="5.2" font-family="Liberation Sans, sans-serif" fill="#1e1e1e">X</text>
<text x="189.80" y="493.10" font-size="5.2" text-anchor="end" font-family="Liberation Sans, sans-serif" fill="#1e1e1e">さ</text>
<rect x="196.00" y="478.40" width="17.70" height="18.10" rx="2.2" fill="#fff" stroke="#707070" stroke-width=".75"/>
<rect x="197.00" y="479.40" width="15.70" height="16.10" rx="1.5" fill="none" stroke="#cfcfcf" stroke-width=".5"/>
<text x="199.20" y="485.60" font-size="5.2" font-family="Liberation Sans, sans-serif" fill="#1e1e1e">C</text>
<text x="210.50" y="493.10" font-size="5.2" text-anchor="end" font-family="Liberation Sans, sans-serif" fill="#1e1e1e">そ</text>
<rect x="216.70" y="478.40" width="17.80" height="18.10" rx="2.2" fill="#fff" stroke="#707070" stroke-width=".75"/>
<rect x="217.70" y="479.40" width="15.80" height="16.10" rx="1.5" fill="none" stroke="#cfcfcf" stroke-width=".5"/>
<text x="219.90" y="485.60" font-size="5.2" font-family="Liberation Sans, sans-serif" fill="#1e1e1e">V</text>
<text x="231.30" y="493.10" font-size="5.2" text-anchor="end" font-family="Liberation Sans, sans-serif" fill="#1e1e1e">ひ</text>
<rect x="237.40" y="478.40" width="17.80" height="18.10" rx="2.2" fill="#fff" stroke="#707070" stroke-width=".75"/>
<rect x="238.40" y="479.40" width="15.80" height="16.10" rx="1.5" fill="none" stroke="#cfcfcf" stroke-width=".5"/>
<text x="240.60" y="485.60" font-size="5.2" font-family="Liberation Sans, sans-serif" fill="#1e1e1e">B</text>
<text x="252.00" y="493.10" font-size="5.2" text-anchor="end" font-family="Liberation Sans, sans-serif" fill="#1e1e1e">こ</text>
<rect x="258.00" y="478.40" width="18.10" height="18.10" rx="2.2" fill="#fff" stroke="#707070" stroke-width=".75"/>
<rect x="259.00" y="479.40" width="16.10" height="16.10" rx="1.5" fill="none" stroke="#cfcfcf" stroke-width=".5"/>
<text x="261.20" y="485.60" font-size="5.2" font-family="Liberation Sans, sans-serif" fill="#1e1e1e">N</text>
<text x="272.90" y="493.10" font-size="5.2" text-anchor="end" font-family="Liberation Sans, sans-serif" fill="#1e1e1e">み</text>
<rect x="278.60" y="478.40" width="18.30" height="18.10" rx="2.2" fill="#fff" stroke="#707070" stroke-width=".75"/>
<rect x="279.60" y="479.40" width="16.30" height="16.10" rx="1.5" fill="none" stroke="#cfcfcf" stroke-width=".5"/>
<text x="281.80" y="485.60" font-size="5.2" font-family="Liberation Sans, sans-serif" fill="#1e1e1e">M</text>
<text x="293.70" y="493.10" font-size="5.2" text-anchor="end" font-family="Liberation Sans, sans-serif" fill="#1e1e1e">も</text>
<rect x="299.80" y="478.40" width="17.80" height="18.10" rx="2.2" fill="#fff" stroke="#707070" stroke-width=".75"/>
<rect x="300.80" y="479.40" width="15.80" height="16.10" rx="1.5" fill="none" stroke="#cfcfcf" stroke-width=".5"/>
<text x="303.00" y="485.60" font-size="4.7" font-family="Liberation Sans, sans-serif" fill="#1e1e1e">&lt;</text>
<text x="303.00" y="493.10" font-size="4.7" font-family="Liberation Sans, sans-serif" fill="#1e1e1e">,</text>
<text x="314.40" y="493.10" font-size="4.7" text-anchor="end" font-family="Liberation Sans, sans-serif" fill="#1e1e1e">ね</text>
<text x="314.40" y="485.60" font-size="4.7" text-anchor="end" font-family="Liberation Sans, sans-serif" fill="#1e1e1e">、</text>
<rect x="320.40" y="478.40" width="18.00" height="18.10" rx="2.2" fill="#fff" stroke="#707070" stroke-width=".75"/>
<rect x="321.40" y="479.40" width="16.00" height="16.10" rx="1.5" fill="none" stroke="#cfcfcf" stroke-width=".5"/>
<text x="323.60" y="485.60" font-size="4.7" font-family="Liberation Sans, sans-serif" fill="#1e1e1e">&gt;</text>
<text x="323.60" y="493.10" font-size="4.7" font-family="Liberation Sans, sans-serif" fill="#1e1e1e">.</text>
<text x="335.20" y="493.10" font-size="4.7" text-anchor="end" font-family="Liberation Sans, sans-serif" fill="#1e1e1e">る</text>
<text x="335.20" y="485.60" font-size="4.7" text-anchor="end" font-family="Liberation Sans, sans-serif" fill="#1e1e1e">。</text>
<rect x="341.20" y="478.40" width="17.60" height="18.10" rx="2.2" fill="#fff" stroke="#707070" stroke-width=".75"/>
<rect x="342.20" y="479.40" width="15.60" height="16.10" rx="1.5" fill="none" stroke="#cfcfcf" stroke-width=".5"/>
<text x="344.40" y="485.60" font-size="4.7" font-family="Liberation Sans, sans-serif" fill="#1e1e1e">?</text>
<text x="344.40" y="493.10" font-size="4.7" font-family="Liberation Sans, sans-serif" fill="#1e1e1e">/</text>
<text x="355.60" y="493.10" font-size="4.7" text-anchor="end" font-family="Liberation Sans, sans-serif" fill="#1e1e1e">め</text>
<text x="355.60" y="485.60" font-size="4.7" text-anchor="end" font-family="Liberation Sans, sans-serif" fill="#1e1e1e">・</text>
<rect x="361.60" y="478.40" width="17.90" height="18.10" rx="2.2" fill="#fff" stroke="#707070" stroke-width=".75"/>
<rect x="362.60" y="479.40" width="15.90" height="16.10" rx="1.5" fill="none" stroke="#cfcfcf" stroke-width=".5"/>
<text x="364.80" y="485.60" font-size="4.7" font-family="Liberation Sans, sans-serif" fill="#1e1e1e">_</text>
<text x="364.80" y="493.10" font-size="4.7" font-family="Liberation Sans, sans-serif" fill="#1e1e1e">\</text>
<text x="376.30" y="493.10" font-size="4.7" text-anchor="end" font-family="Liberation Sans, sans-serif" fill="#1e1e1e">ろ</text>
<rect x="381.90" y="478.40" width="15.10" height="18.10" rx="2.2" fill="#fff" stroke="#707070" stroke-width=".75"/>
<rect x="382.90" y="479.40" width="13.10" height="16.10" rx="1.5" fill="none" stroke="#cfcfcf" stroke-width=".5"/>
<path d="M389.400 481.400v5.600M389.400 480.600l-1.400 2.200h2.800z" stroke="#222" stroke-width=".6" fill="#222"/><text x="389.400" y="493.600" font-size="4.400" text-anchor="middle" font-family="Liberation Sans, sans-serif" fill="#1e1e1e">PgUp</text>
<rect x="399.40" y="478.40" width="18.60" height="18.10" rx="2.2" fill="#fff" stroke="#707070" stroke-width=".75"/>
<rect x="400.40" y="479.40" width="16.60" height="16.10" rx="1.5" fill="none" stroke="#cfcfcf" stroke-width=".5"/>
<text x="408.700" y="486" font-size="5.6" text-anchor="middle" font-family="Liberation Sans, sans-serif" fill="#1e1e1e">Shift</text><path d="M408.700 487.600l-3.400 3h1.800v1.800h3.200v-1.800h1.800z" fill="#111"/>
<rect x="109.50" y="499.00" width="18.40" height="18.30" rx="2.2" fill="#fff" stroke="#707070" stroke-width=".75"/>
<rect x="110.50" y="500.00" width="16.40" height="16.30" rx="1.5" fill="none" stroke="#cfcfcf" stroke-width=".5"/>
<text x="118.700" y="509.800" font-size="6" text-anchor="middle" font-family="Liberation Sans, sans-serif" fill="#1e1e1e">Fn</text>
<rect x="130.40" y="499.00" width="18.20" height="18.30" rx="2.2" fill="#fff" stroke="#707070" stroke-width=".75"/>
<rect x="131.40" y="500.00" width="16.20" height="16.30" rx="1.5" fill="none" stroke="#cfcfcf" stroke-width=".5"/>
<text x="139.50" y="510.38" font-size="6.2" text-anchor="middle" font-family="Liberation Sans, sans-serif" fill="#1e1e1e">Ctrl</text>
<rect x="151.50" y="499.00" width="18.20" height="18.30" rx="2.2" fill="#fff" stroke="#707070" stroke-width=".75"/>
<rect x="152.50" y="500.00" width="16.20" height="16.30" rx="1.5" fill="none" stroke="#cfcfcf" stroke-width=".5"/>
<path d="M157.200 504.600l2.800-.4v3.200h-2.800zM160.500 504.100l3.600-.5v3.800h-3.600zM157.200 507.900h2.800v3.200l-2.800-.4zM160.500 507.900h3.600v3.800l-3.600-.5z" fill="#111"/>
<rect x="172.50" y="499.00" width="17.60" height="18.30" rx="2.2" fill="#fff" stroke="#707070" stroke-width=".75"/>
<rect x="173.50" y="500.00" width="15.60" height="16.30" rx="1.5" fill="none" stroke="#cfcfcf" stroke-width=".5"/>
<text x="181.300" y="509.800" font-size="6" text-anchor="middle" font-family="Liberation Sans, sans-serif" fill="#1e1e1e">Alt</text>
<rect x="192.50" y="499.00" width="16.20" height="18.30" rx="2.2" fill="#fff" stroke="#707070" stroke-width=".75"/>
<rect x="193.50" y="500.00" width="14.20" height="16.30" rx="1.5" fill="none" stroke="#cfcfcf" stroke-width=".5"/>
<text x="200.60" y="509.66" font-size="4.2" text-anchor="middle" font-family="Liberation Sans, sans-serif" fill="#1e1e1e">無変換</text>
<rect x="210.90" y="499.00" width="70.20" height="18.30" rx="2.2" fill="#fff" stroke="#707070" stroke-width=".75"/>
<rect x="211.90" y="500.00" width="68.20" height="16.30" rx="1.5" fill="none" stroke="#cfcfcf" stroke-width=".5"/>
<rect x="283.90" y="499.00" width="15.50" height="18.30" rx="2.2" fill="#fff" stroke="#707070" stroke-width=".75"/>
<rect x="284.90" y="500.00" width="13.50" height="16.30" rx="1.5" fill="none" stroke="#cfcfcf" stroke-width=".5"/>
<text x="291.65" y="509.81" font-size="4.6" text-anchor="middle" font-family="Liberation Sans, sans-serif" fill="#1e1e1e">変換</text>
<rect x="301.80" y="499.00" width="18.30" height="18.30" rx="2.2" fill="#fff" stroke="#707070" stroke-width=".75"/>
<rect x="302.80" y="500.00" width="16.30" height="16.30" rx="1.5" fill="none" stroke="#cfcfcf" stroke-width=".5"/>
<text x="310.950" y="504.6" font-size="3.800" text-anchor="middle" font-family="Liberation Sans, sans-serif" fill="#1e1e1e">カタカナ</text>
<text x="310.950" y="508.8" font-size="3.800" text-anchor="middle" font-family="Liberation Sans, sans-serif" fill="#1e1e1e">ひらがな</text>
<text x="310.950" y="513.0" font-size="3.800" text-anchor="middle" font-family="Liberation Sans, sans-serif" fill="#1e1e1e">ローマ字</text>
<rect x="322.90" y="499.00" width="15.50" height="18.30" rx="2.2" fill="#fff" stroke="#707070" stroke-width=".75"/>
<rect x="323.90" y="500.00" width="13.50" height="16.30" rx="1.5" fill="none" stroke="#cfcfcf" stroke-width=".5"/>
<rect x="328.400" y="504.400" width="4.600" height="7" fill="none" stroke="#333" stroke-width=".5"/><rect x="328.400" y="506.200" width="4.600" height="1.800" fill="#222"/>
<rect x="341.20" y="499.00" width="17.60" height="18.30" rx="2.2" fill="#fff" stroke="#707070" stroke-width=".75"/>
<rect x="342.20" y="500.00" width="15.60" height="16.30" rx="1.5" fill="none" stroke="#cfcfcf" stroke-width=".5"/>
<text x="350.00" y="510.53" font-size="6.6" text-anchor="middle" font-family="Liberation Sans, sans-serif" fill="#1e1e1e">Ctrl</text>
<rect x="361.60" y="499.00" width="17.90" height="18.30" rx="2.2" fill="#fff" stroke="#707070" stroke-width=".75"/>
<rect x="362.60" y="500.00" width="15.90" height="16.30" rx="1.5" fill="none" stroke="#cfcfcf" stroke-width=".5"/>
<path d="M367 505h7.400M369.600 503.800l-2.800 1.200 2.800 1.200z" stroke="#222" stroke-width=".6" fill="#222"/><text x="370.550" y="513.800" font-size="4.400" text-anchor="middle" font-family="Liberation Sans, sans-serif" fill="#1e1e1e">Home</text>
<rect x="381.90" y="499.00" width="15.10" height="18.30" rx="2.2" fill="#fff" stroke="#707070" stroke-width=".75"/>
<rect x="382.90" y="500.00" width="13.10" height="16.30" rx="1.5" fill="none" stroke="#cfcfcf" stroke-width=".5"/>
<path d="M389.400 502.200v5.400M389.400 508.400l-1.400-2.200h2.800z" stroke="#222" stroke-width=".6" fill="#222"/><text x="389.400" y="513.800" font-size="4.400" text-anchor="middle" font-family="Liberation Sans, sans-serif" fill="#1e1e1e">PgDn</text>
<rect x="399.40" y="499.00" width="18.60" height="18.30" rx="2.2" fill="#fff" stroke="#707070" stroke-width=".75"/>
<rect x="400.40" y="500.00" width="16.60" height="16.30" rx="1.5" fill="none" stroke="#cfcfcf" stroke-width=".5"/>
<path d="M405 505h7.400M409.800 503.800l2.800 1.200-2.800 1.200z" stroke="#222" stroke-width=".6" fill="#222"/><text x="408.700" y="513.800" font-size="4.400" text-anchor="middle" font-family="Liberation Sans, sans-serif" fill="#1e1e1e">End</text>
<rect x="148.400" y="413.500" width="25.200" height="25.700" rx="3.600" fill="none" stroke="#fb0007" stroke-width="3.800"/>
<rect x="108.300" y="473.600" width="45.300" height="28.400" rx="4.800" fill="none" stroke="#fb0007" stroke-width="4"/></svg>
<div class="t j" style="left:104.300px;top:374.8px;width:323.15px;font-size:10.35px;line-height:13px;font-weight:bold;color:#fb0007;transform:scaleX(0.989);transform-origin:left center;">「ダブルクォーテーション」<span style="font-size:8.5px;vertical-align:.5px">→</span>「Shift」を押しながら「ふ」のボタン</div>
<svg width="1024" height="576" viewBox="0 0 1024 576"><circle cx="324.500" cy="321.700" r="7.200" fill="#f8857c"/><path d="M323 317.600h3v2.700h2.700v3h-2.700v2.700h-3v-2.700h-2.700v-3h2.700z" fill="#fff" stroke="#3a2a2a" stroke-width=".5"/></svg>
</div>
<div style="position:absolute;left:0;top:0;width:80px;height:576px;background:#000"></div>
<div style="position:absolute;left:944px;top:0;width:80px;height:576px;background:#000"></div>
</body></html>
